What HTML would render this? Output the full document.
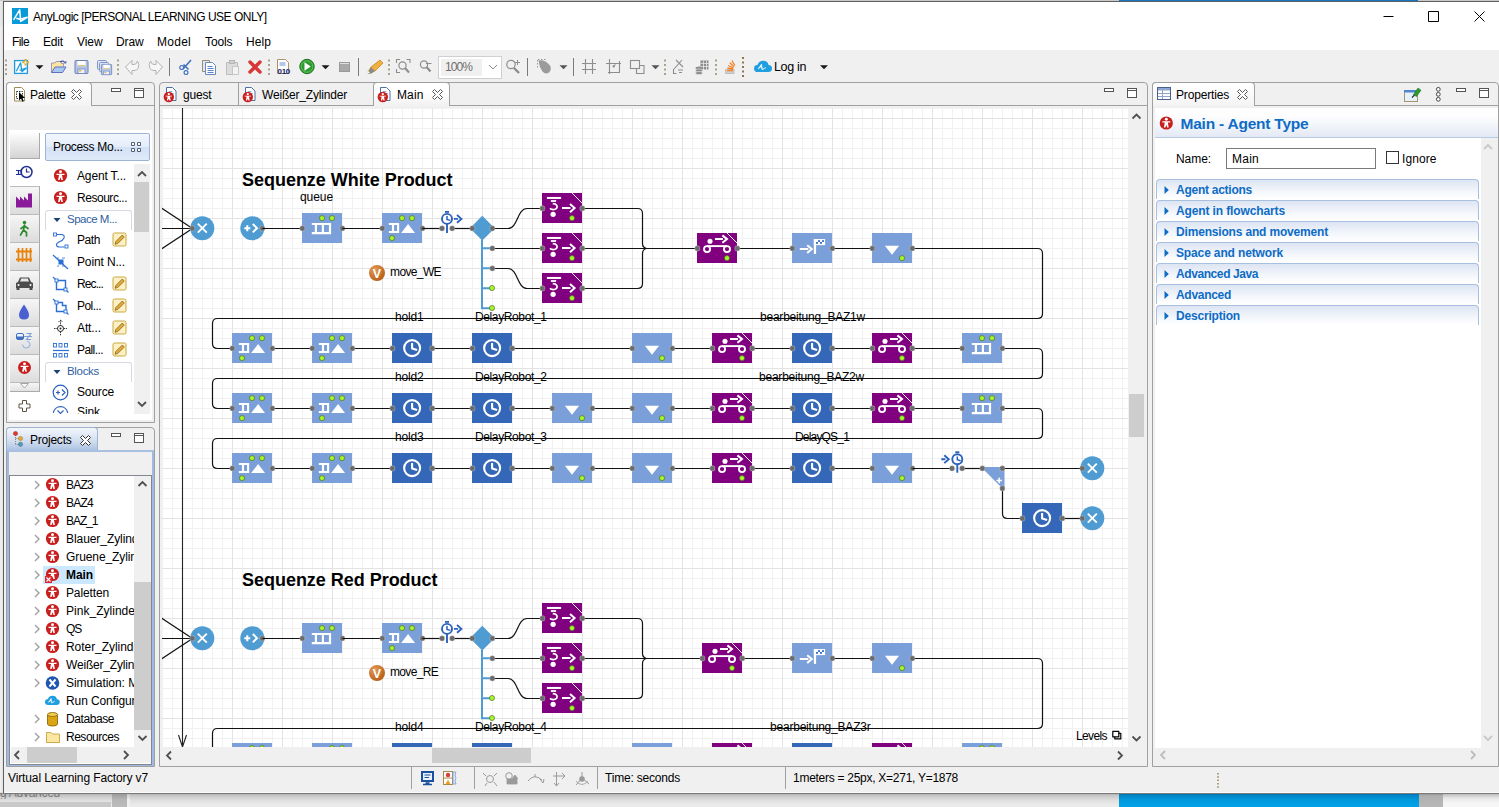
<!DOCTYPE html><html><head><meta charset="utf-8"><title>AnyLogic</title><style>
html,body{margin:0;padding:0}
body{width:1499px;height:807px;overflow:hidden;position:relative;background:#f4f4f4;font-family:"Liberation Sans",sans-serif;font-size:12px;color:#000}
.a{position:absolute;box-sizing:border-box}
.t{position:absolute;white-space:nowrap;font-family:"Liberation Sans",sans-serif}
svg{position:absolute;left:0;top:0;overflow:visible}
svg text{font-family:"Liberation Sans",sans-serif}
</style></head><body>
<div class="a" style="left:0px;top:0px;width:1499px;height:1px;background:#c9c9c9"></div>
<div class="a" style="left:1119px;top:0px;width:299px;height:1px;background:#1577c2"></div>
<div class="a" style="left:0px;top:1px;width:4px;height:793px;background:linear-gradient(90deg,#f2f2f2,#dcdcdc)"></div>
<div class="a" style="left:0px;top:1px;width:4px;height:25px;background:linear-gradient(90deg,#ebebeb,#d8d8d8)"></div>
<div class="a" style="left:0px;top:793px;width:1499px;height:14px;background:linear-gradient(#8a8a8a 0,#b4b4b4 1px,#c9c9c9 3px,#dedede 7px,#ebebeb 12px)"></div>
<div class="a" style="left:0px;top:802px;width:111px;height:5px;background:#c9c9c9"></div>
<div class="a" style="left:112px;top:794px;width:15px;height:13px;background:linear-gradient(#9a9a9a,#b4b4b4 5px,#bcbcbc)"></div>
<div class="a" style="left:127px;top:794px;width:3px;height:13px;background:linear-gradient(#c8c8c8,#f0f0f0 6px)"></div>
<div class="a" style="left:1119px;top:793px;width:300px;height:14px;background:linear-gradient(#045a8c,#0083c3 2px,#0095d8 6px,#00a0e6 11px)"></div>
<div class="a" style="left:1443px;top:794px;width:56px;height:13px;background:linear-gradient(#bdbdbd,#e6e6e6 4px,#f6f6f6 9px)"></div>
<div class="a" style="left:1419px;top:793px;width:24px;height:14px;background:linear-gradient(#8a8a8a,#b0b0b0 3px,#b8b8b8)"></div>
<span class="t" style="left:0.00px;top:786.84px;font-size:12px;line-height:12px;letter-spacing:-0.272px;color:#666;clip-path:inset(6px 0 0 0);opacity:0.8">g Advanced</span>
<div class="a" style="left:3px;top:1px;width:1496px;height:793px;background:#f0f0f0;border:1px solid #5f5f5f;border-bottom-color:#7a7a7a;border-right:none"></div>
<div class="a" style="left:4px;top:792px;width:1495px;height:1px;background:#fafafa"></div>
<div class="a" style="left:4px;top:2px;width:1495px;height:48px;background:#fff"></div>
<svg width="1499" height="807" ><rect x="12" y="8" width="16" height="16" fill="#0b9ad8"/><path d="M13.600,19.900L19.700,9.900L20.700,21.400L27.200,17.300L19.800,19.300L16.300,18.300" fill="none" stroke="#fff" stroke-width="1.500" stroke-linejoin="round"/></svg>
<span class="t" style="left:33.00px;top:10.84px;font-size:12px;line-height:12px;letter-spacing:-0.502px;color:#000;">AnyLogic [PERSONAL LEARNING USE ONLY]</span>
<svg width="1499" height="807"><path d="M1383.5,16.5h10M1428.5,11.5h10v10h-10zM1474.5,11.5l10,10m0,-10l-10,10" stroke="#000" stroke-width="1" fill="none"/></svg>
<span class="t" style="left:12.00px;top:35.84px;font-size:12px;line-height:12px;letter-spacing:-0.584px;color:#000;">File</span>
<span class="t" style="left:43.00px;top:35.84px;font-size:12px;line-height:12px;letter-spacing:-0.169px;color:#000;">Edit</span>
<span class="t" style="left:77.00px;top:35.84px;font-size:12px;line-height:12px;letter-spacing:-0.073px;color:#000;">View</span>
<span class="t" style="left:116.00px;top:35.84px;font-size:12px;line-height:12px;letter-spacing:-0.125px;color:#000;">Draw</span>
<span class="t" style="left:157.00px;top:35.84px;font-size:12px;line-height:12px;letter-spacing:0.264px;color:#000;">Model</span>
<span class="t" style="left:205.00px;top:35.84px;font-size:12px;line-height:12px;letter-spacing:-0.102px;color:#000;">Tools</span>
<span class="t" style="left:246.00px;top:35.84px;font-size:12px;line-height:12px;letter-spacing:0.080px;color:#000;">Help</span>
<svg width="1499" height="807" ><path d="M6,59.5V75.5" stroke="#a9a188" stroke-width="2" stroke-dasharray="2,2.5" fill="none"/><rect x="14.600" y="60.600" width="12.800" height="12.800" fill="#fff" stroke="#1d9bdc" stroke-width="1.300"/><path d="M16.300,71.200l4.300,-8.400l1.300,8.900l4.400,-3.700l-6.800,2.100" fill="none" stroke="#1d9bdc" stroke-width="1.300" stroke-linejoin="round"/><path d="M25.600,59v6.600M22.300,62.300h6.600" stroke="#d4a420" stroke-width="2"/><path d="M25.600,60.500v3.600M23.800,62.300h3.600" stroke="#fff7d0" stroke-width="0.800"/><path d="M35.5,65.2h8l-4,4z" fill="#1a1a1a"/><path d="M51.500,72.500v-9.500h3.500l1,-1.500h5.500v2h2v3" fill="#fbe5a0" stroke="#9a8fb4" stroke-width="0.900"/><path d="M51.500,72.500l3.500,-5.500h11l-3.500,5.500z" fill="#a9c7f0" stroke="#5f6fc0" stroke-width="1"/><path d="M60,62q2.500,-2 4.800,0.300" fill="none" stroke="#4a5a9a" stroke-width="1.200"/><path d="M63.600,63.200l2.600,0.300l0.200,-2.800z" fill="#4a5a9a"/><g transform="translate(74.5,60) scale(1)"><rect x="0.5" y="0.5" width="13" height="13" rx="1" fill="#b4c5e6" stroke="#6a7fb5"/><rect x="3" y="1" width="8" height="5" fill="#fff"/><rect x="3" y="5" width="8" height="1.2" fill="#e4c882"/><rect x="3.5" y="9" width="7" height="4.5" fill="#f4f4f8" stroke="#6d86c4" stroke-width="0.8"/><rect x="4.5" y="10" width="2.4" height="1.5" fill="#d9b45a"/></g><rect x="97.5" y="60.5" width="9" height="9" rx="1" fill="#dfe7f6" stroke="#7f95c8"/><rect x="99.500" y="62.5" width="9" height="9" rx="1" fill="#dfe7f6" stroke="#7f95c8"/><g transform="translate(101,64) scale(0.79)"><rect x="0.5" y="0.5" width="13" height="13" rx="1" fill="#b4c5e6" stroke="#6a7fb5"/><rect x="3" y="1" width="8" height="5" fill="#fff"/><rect x="3" y="5" width="8" height="1.2" fill="#e4c882"/><rect x="3.5" y="9" width="7" height="4.5" fill="#f4f4f8" stroke="#6d86c4" stroke-width="0.8"/><rect x="4.5" y="10" width="2.4" height="1.5" fill="#d9b45a"/></g><path d="M118,59.5V75.5" stroke="#a9a188" stroke-width="2" stroke-dasharray="2,2.5" fill="none"/><path d="M125.500,67l6.500,-6.500v4h2q2.500,0 3.500,-3.500q2.500,4 0.500,7.500q-1.500,2 -4,2h-2v4z" fill="#f6f6f6" stroke="#b3b3b3" stroke-width="1"/><path d="M162.500,67l-6.500,-6.500v4h-2q-2.500,0 -3.500,-3.500q-2.500,4 -0.500,7.500q1.500,2 4,2h2v4z" fill="#f6f6f6" stroke="#b3b3b3" stroke-width="1"/><path d="M169.5,58V76" stroke="#7a7a7a" stroke-width="1" fill="none"/><path d="M191,60l-8,9M183.500,64.500l5,5" stroke="#3f6fc0" stroke-width="1.600" fill="none"/><circle cx="181.700" cy="67.500" r="1.900" fill="#fff" stroke="#3f6fc0" stroke-width="1.2"/><circle cx="186" cy="72.500" r="1.900" fill="#fff" stroke="#3f6fc0" stroke-width="1.2"/><path d="M202.500,60.500h7v11h-7z" fill="#dfe9f8" stroke="#9a8f6a"/><path d="M205.500,62.500h7l3,3v9h-10z" fill="#fff" stroke="#6f86bd"/><path d="M207.500,66.500h5M207.500,68.500h6M207.500,70.500h6M207.500,72.500h6" stroke="#5b83cf" stroke-width="1"/><path d="M226.500,62.500h11v12h-11z" fill="#dcdcdc" stroke="#bdbdbd"/><rect x="229.500" y="60.500" width="5" height="3" fill="#cfcfcf" stroke="#b5b5b5"/><path d="M232.500,66.500h6v8h-6z" fill="#f3f3f3" stroke="#c5c5c5"/><path d="M250,62l10,10M260,62l-10,10" stroke="#d93636" stroke-width="3.400" stroke-linecap="round" fill="none"/><path d="M269,59.5V75.5" stroke="#a9a188" stroke-width="2" stroke-dasharray="2,2.5" fill="none"/><path d="M277.500,59.500h8l3,3v11h-11z" fill="#fff" stroke="#a9946a"/><path d="M279.500,63h6M279.500,65h6" stroke="#6a8fd0" stroke-width="1"/><text x="277.50" y="73.50" font-size="8" font-weight="bold" letter-spacing="-0.282" fill="#13205f" text-anchor="start" >010</text><circle cx="307" cy="66.500" r="7.200" fill="#2f9a2f" stroke="#1e6f1e" stroke-width="1"/><circle cx="307" cy="66.500" r="5.800" fill="none" stroke="#5cc25c" stroke-width="1"/><path d="M304.500,62.200l6.200,4.300l-6.200,4.300z" fill="#fff"/><path d="M321.5,65.2h8l-4,4z" fill="#1a1a1a"/><rect x="339.500" y="62.500" width="10" height="9" fill="#a9a9a9" stroke="#9a9a9a"/><path d="M340,63.500h9" stroke="#e0e0e0" stroke-width="1"/><path d="M358.5,58V76" stroke="#7a7a7a" stroke-width="1" fill="none"/><path d="M368,72l3,-5l9,-7l3,3l-8,8z" fill="#f0b03f" stroke="#c98a1e" stroke-width="0.800"/><path d="M371,67l4,4l-3.500,2.500l-4,0.500z" fill="#8a8a8a"/><path d="M367,73.500l3,-0.500l-1.500,-2z" fill="#fff6d0"/><path d="M389,59.5V75.5" stroke="#a9a188" stroke-width="2" stroke-dasharray="2,2.5" fill="none"/><path d="M396.500,63v-3.500h3.500M406.500,59.500h3.500v3.500M396.500,69v3.500h3.500" stroke="#8d8d8d" stroke-width="1.100" fill="none"/><circle cx="402.500" cy="65.500" r="3.600" fill="none" stroke="#8d8d8d" stroke-width="1.200"/><path d="M405,68l4,4.500" stroke="#8d8d8d" stroke-width="2"/><circle cx="424" cy="64.500" r="3.600" fill="none" stroke="#8d8d8d" stroke-width="1.200"/><path d="M426.500,67l4,4.500" stroke="#8d8d8d" stroke-width="2.200"/><path d="M426,63.500h5.500" stroke="#8d8d8d" stroke-width="1"/><rect x="438.500" y="56.500" width="63" height="22" fill="#fff" stroke="#d0d0d0"/><rect x="441" y="59" width="41" height="17" fill="#f0f0f0"/><text x="445.00" y="71.00" font-size="12" letter-spacing="-0.923" fill="#6d6d6d" text-anchor="start" >100%</text><path d="M489,65l4,4l4,-4" stroke="#8a8a8a" stroke-width="1" fill="none"/><circle cx="511" cy="64.500" r="4.200" fill="none" stroke="#8d8d8d" stroke-width="1.200"/><path d="M514,68l5,5" stroke="#8d8d8d" stroke-width="2.400"/><path d="M515,62.500h5M517.500,60v5" stroke="#8d8d8d" stroke-width="1"/><path d="M527.5,58V76" stroke="#7a7a7a" stroke-width="1" fill="none"/><path d="M538.500,60.500q6,-1.500 11.500,5q2,4 -1,7q-3.500,2.500 -6.500,-1q-3,-4 -4,-11z" fill="#9b9b9b"/><path d="M537.500,60v9M538,59.500h8" stroke="#9b9b9b" stroke-width="1" stroke-dasharray="1.500,1.500" fill="none"/><path d="M559.5,65.2h8l-4,4z" fill="#555"/><path d="M573.5,58V76" stroke="#7a7a7a" stroke-width="1" fill="none"/><path d="M585.500,59v15M592.500,59v15M582,63.500h14M582,69.500h14" stroke="#8d8d8d" stroke-width="1.100" fill="none"/><path d="M609.500,59v15M606,63.500h15M619.500,61v11.500h-11.500" stroke="#8d8d8d" stroke-width="1.100" fill="none"/><path d="M612,66l4,-2l-2,4z" fill="#8d8d8d"/><rect x="630.500" y="60.500" width="9" height="8" fill="none" stroke="#8d8d8d" stroke-width="1.100"/><path d="M636.500,69v4.500h7.500v-8h-4" fill="none" stroke="#8d8d8d" stroke-width="1.100"/><path d="M651.5,65.2h8l-4,4z" fill="#555"/><path d="M665,59.5V75.5" stroke="#a9a188" stroke-width="2" stroke-dasharray="2,2.5" fill="none"/><path d="M682,60l-8,9M673.500,69v4.500h3M678,70h5M679,72.500h3M676,60l7,7" stroke="#8d8d8d" stroke-width="1.100" fill="none"/><rect x="700.500" y="60.500" width="8" height="9" fill="#8d8d8d"/><path d="M701,63.500h8M701,66.500h8M703.500,61v9M706.500,61v9" stroke="#e8e8e8" stroke-width="0.800"/><ellipse cx="699" cy="68" rx="3.500" ry="1.600" fill="#8d8d8d"/><ellipse cx="699" cy="70.500" rx="3.500" ry="1.600" fill="#8d8d8d" stroke="#f0f0f0" stroke-width="0.500"/><ellipse cx="699" cy="73" rx="3.500" ry="1.600" fill="#8d8d8d" stroke="#f0f0f0" stroke-width="0.500"/><path d="M716,59.5V75.5" stroke="#a9a188" stroke-width="2" stroke-dasharray="2,2.5" fill="none"/><path d="M725.500,69v4.500h8.500v-4.500" fill="#cfcfcf" stroke="#bdbdbd" stroke-width="1"/><path d="M727,70.500h6M727.300,68l5.800,1M728.200,65.500l5.300,2.500M729.800,62.800l4.200,4M732,60.500l2.800,5" stroke="#f48024" stroke-width="1.300" fill="none"/><path d="M743,57V77.5" stroke="#8c7a4e" stroke-width="2" stroke-dasharray="2,2.5" fill="none"/><g transform="translate(754,60.5) scale(1)"><path d="M4,11.500q-4,0 -4,-3.600q0,-3.200 3.600,-3.600q1.400,-4 5.600,-4q4.400,0 5.400,4.200q3.400,0.300 3.400,3.500q0,3.500 -4,3.500z" fill="#1f9fe0"/><path d="M4,8.500l3.500,-5l1,5.500l3.500,-2l-4,2.200l-0.700,-3.200z" fill="#fff" stroke="#fff" stroke-width="0.500"/></g><text x="774.00" y="71.00" font-size="12.5" letter-spacing="-0.342" fill="#000" text-anchor="start" >Log in</text><path d="M820,65.2h8l-4,4z" fill="#1a1a1a"/></svg>
<div class="a" style="left:6px;top:82px;width:149px;height:341px;background:#f0f0f0;border:1px solid #a0a0a0;border-radius:4px 4px 0 0"></div><div class="a" style="left:7px;top:105px;width:147px;height:1px;background:#a0a0a0"></div><div class="a" style="left:6px;top:82px;width:86px;height:24px;background:linear-gradient(#fff,#f4f4f4);border:1px solid #a0a0a0;border-bottom:none;border-radius:4px 4px 0 0"></div><span class="t" style="left:30.00px;top:89.34px;font-size:12px;line-height:12px;letter-spacing:-0.265px;color:#000;">Palette</span><div class="a" style="left:9px;top:130px;width:143px;height:290px;background:#fff"></div><div class="a" style="left:10px;top:133px;width:30px;height:26px;background:linear-gradient(#fdfdfd,#d4d4d4);border-right:1px solid #aaa;border-bottom:1px solid #aaa"></div><div class="a" style="left:10px;top:186px;width:30px;height:28px;background:linear-gradient(#f6f6f6,#dcdcdc);border-right:1px solid #aaa;border-top:1px solid #bbb"></div><div class="a" style="left:10px;top:214px;width:30px;height:28px;background:linear-gradient(#f6f6f6,#dcdcdc);border-right:1px solid #aaa;border-top:1px solid #bbb"></div><div class="a" style="left:10px;top:242px;width:30px;height:28px;background:linear-gradient(#f6f6f6,#dcdcdc);border-right:1px solid #aaa;border-top:1px solid #bbb"></div><div class="a" style="left:10px;top:270px;width:30px;height:28px;background:linear-gradient(#f6f6f6,#dcdcdc);border-right:1px solid #aaa;border-top:1px solid #bbb"></div><div class="a" style="left:10px;top:298px;width:30px;height:28px;background:linear-gradient(#f6f6f6,#dcdcdc);border-right:1px solid #aaa;border-top:1px solid #bbb"></div><div class="a" style="left:10px;top:326px;width:30px;height:28px;background:linear-gradient(#f6f6f6,#dcdcdc);border-right:1px solid #aaa;border-top:1px solid #bbb"></div><div class="a" style="left:10px;top:354px;width:30px;height:28px;background:linear-gradient(#f6f6f6,#dcdcdc);border-right:1px solid #aaa;border-top:1px solid #bbb"></div><div class="a" style="left:10px;top:382px;width:30px;height:10px;background:linear-gradient(#f6f6f6,#e2e2e2);border-right:1px solid #aaa;border-top:1px solid #bbb;border-bottom:1px solid #aaa"></div><div class="a" style="left:45px;top:133px;width:105px;height:28px;background:linear-gradient(#f3f7fd,#e3ecfa 50%,#d3e1f6 51%,#dfe9f9);border:1px solid #9db3d4;border-radius:2px"></div><span class="t" style="left:53.00px;top:140.84px;font-size:12px;line-height:12px;letter-spacing:-0.296px;color:#000;">Process Mo...</span><span class="t" style="left:77.00px;top:170.34px;font-size:12px;line-height:12px;letter-spacing:-0.148px;color:#000;">Agent T...</span><span class="t" style="left:77.00px;top:192.34px;font-size:12px;line-height:12px;letter-spacing:-0.468px;color:#000;">Resourc...</span><div class="a" style="left:45px;top:210px;width:87px;height:20px;background:#fff;border:1px solid #d4d9e2;border-bottom:none;border-radius:3px 3px 0 0"></div><span class="t" style="left:67.00px;top:213.77px;font-size:11.5px;line-height:11.5px;letter-spacing:-0.496px;color:#2f5e9e;">Space M...</span><span class="t" style="left:77.00px;top:234.34px;font-size:12px;line-height:12px;letter-spacing:-0.421px;color:#000;">Path</span><span class="t" style="left:77.00px;top:256.34px;font-size:12px;line-height:12px;letter-spacing:-0.135px;color:#000;">Point N...</span><span class="t" style="left:77.00px;top:278.34px;font-size:12px;line-height:12px;letter-spacing:-0.890px;color:#000;">Rec...</span><span class="t" style="left:77.00px;top:300.34px;font-size:12px;line-height:12px;letter-spacing:-0.557px;color:#000;">Pol...</span><span class="t" style="left:77.00px;top:322.34px;font-size:12px;line-height:12px;letter-spacing:-0.112px;color:#000;">Att...</span><span class="t" style="left:77.00px;top:344.34px;font-size:12px;line-height:12px;letter-spacing:-0.573px;color:#000;">Pall...</span><div class="a" style="left:45px;top:362px;width:87px;height:20px;background:#fff;border:1px solid #d4d9e2;border-bottom:none;border-radius:3px 3px 0 0"></div><span class="t" style="left:67.00px;top:365.77px;font-size:11.5px;line-height:11.5px;letter-spacing:-0.312px;color:#2f5e9e;">Blocks</span><span class="t" style="left:77.00px;top:386.34px;font-size:12px;line-height:12px;letter-spacing:-0.170px;color:#000;">Source</span><div class="a" style="left:77px;top:405px;width:50px;height:9px;overflow:hidden"><span class="t" style="left:0.00px;top:1.34px;font-size:12px;line-height:12px;letter-spacing:-0.086px;color:#000;">Sink</span></div><div class="a" style="left:134px;top:164px;width:16px;height:250px;background:#f0f0f0"></div><div class="a" style="left:134px;top:182px;width:15px;height:50px;background:#cdcdcd"></div><svg width="1499" height="807" ><circle cx="26.500" cy="172" r="5.500" fill="none" stroke="#1f2f94" stroke-width="1.500"/><path d="M26.500,168.500v3.500h3" stroke="#1f2f94" stroke-width="1.200" fill="none"/><path d="M16,170.500h6M16,174.500h6M18.500,170.500v4M21.500,170.500v4" stroke="#1f2f94" stroke-width="1.200" fill="none"/><path d="M16,207.500v-11l4,4v-4l4,4v-4l4,4v-7h4v14z" fill="#8a1a9a"/><circle cx="24.500" cy="222.500" r="1.800" fill="#2d8a2d"/><path d="M24.500,225l-1,5l-3,5M23.500,230l3,2.500v3.500M24.500,226l-3.500,2.500M24.500,226l3.500,2.500" stroke="#2d8a2d" stroke-width="1.700" fill="none" stroke-linecap="round"/><path d="M16,251.500h16M16,259.500h16" stroke="#e8820c" stroke-width="1.800"/><path d="M18.500,248v14M22.500,248v14M26.500,248v14M30.500,248v14" stroke="#e8820c" stroke-width="1.700"/><path d="M16,288v-5l2,-1l2,-4.500h9l2,4.500l2,1v5z" fill="#4d4d4d"/><path d="M20,281.500l1.200,-3h6.600l1.200,3z" fill="#e8e8e8"/><rect x="16.500" y="287" width="3" height="3" fill="#4d4d4d"/><rect x="29.500" y="287" width="3" height="3" fill="#4d4d4d"/><circle cx="18.500" cy="285" r="1" fill="#fff"/><circle cx="30.500" cy="285" r="1" fill="#fff"/><path d="M24,304.500q-5,7 -5,10.500q0,4.500 5,4.500q5,0 5,-4.500q0,-3.500 -5,-10.500z" fill="#4a5fd0"/><rect x="16.500" y="333.500" width="7" height="6" rx="1.500" fill="#eef4fc" stroke="#3f6fc0"/><rect x="17" y="336.500" width="6" height="3" fill="#3f6fc0"/><path d="M24,336.500h8M26.500,333.500h4.500l-4.500,6h4.500" stroke="#7f9fd6" stroke-width="1.100" fill="none"/><path d="M22.500,344.500q0.500,3.500 4,3.500q3.500,-0.500 3.500,-4q-0.500,-2.500 -3,-3" stroke="#9ab4dc" stroke-width="1.100" fill="none"/><circle cx="24.5" cy="367.5" r="6.5" fill="#c81e1e"/><circle cx="24.5" cy="363.856" r="1.43" fill="#fff"/><path d="M20.56,365.83L28.44,365.83L28.44,367.01L25.98,367.01L26.86,371.83L25.39,371.83L24.50,369.27L23.61,371.83L22.14,371.83L23.02,367.01L20.56,367.01Z" fill="#fff"/><path d="M20.500,383.500h8l-4,4.500z" fill="#fff" stroke="#9a9a9a" stroke-width="0.900"/><path d="M22.500,400.500h4v3.500h3.500v4h-3.500v3.500h-4v-3.500h-3.500v-4h3.500z" fill="#fff" stroke="#5c5540" stroke-width="1"/><path d="M131.500,142.500h3v3h-3zM137.500,142.500h3v3h-3zM131.500,148.500h3v3h-3zM137.500,148.500h3v3h-3z" fill="#fff" stroke="#55617a" stroke-width="1"/><circle cx="60.5" cy="175.5" r="6.6" fill="#c81e1e"/><circle cx="60.5" cy="171.8" r="1.45" fill="#fff"/><path d="M56.50,173.80L64.50,173.80L64.50,175.00L62.00,175.00L62.90,179.90L61.40,179.90L60.50,177.30L59.60,179.90L58.10,179.90L59.00,175.00L56.50,175.00Z" fill="#fff"/><circle cx="60.5" cy="197.5" r="6.6" fill="#c81e1e"/><circle cx="60.5" cy="193.8" r="1.45" fill="#fff"/><path d="M56.50,195.80L64.50,195.80L64.50,197.00L62.00,197.00L62.90,201.90L61.40,201.90L60.50,199.30L59.60,201.90L58.10,201.90L59.00,197.00L56.50,197.00Z" fill="#fff"/><path d="M53.5,218h7l-3.500,4z" fill="#1d3f7a"/><rect x="113" y="233" width="13" height="13" rx="1.500" fill="#fdf0c4" stroke="#c9a93f" stroke-width="1"/><path d="M115.8,241.5l6.500,-6.500l2,2l-6.500,6.500l-2.800,0.800z" fill="#e2a93a" stroke="#7a5a12" stroke-width="0.700"/><rect x="113" y="277" width="13" height="13" rx="1.500" fill="#fdf0c4" stroke="#c9a93f" stroke-width="1"/><path d="M115.8,285.5l6.500,-6.500l2,2l-6.500,6.500l-2.800,0.800z" fill="#e2a93a" stroke="#7a5a12" stroke-width="0.700"/><rect x="113" y="299" width="13" height="13" rx="1.500" fill="#fdf0c4" stroke="#c9a93f" stroke-width="1"/><path d="M115.8,307.5l6.500,-6.500l2,2l-6.500,6.500l-2.800,0.800z" fill="#e2a93a" stroke="#7a5a12" stroke-width="0.700"/><rect x="113" y="321" width="13" height="13" rx="1.500" fill="#fdf0c4" stroke="#c9a93f" stroke-width="1"/><path d="M115.8,329.5l6.500,-6.500l2,2l-6.500,6.500l-2.800,0.800z" fill="#e2a93a" stroke="#7a5a12" stroke-width="0.700"/><rect x="113" y="343" width="13" height="13" rx="1.500" fill="#fdf0c4" stroke="#c9a93f" stroke-width="1"/><path d="M115.8,351.5l6.500,-6.500l2,2l-6.500,6.500l-2.800,0.800z" fill="#e2a93a" stroke="#7a5a12" stroke-width="0.700"/><path d="M56,234.500h5q4,0 3,3.500q-1,2.500 -5,4q-3,1.500 -2.500,3.500q0.500,1.500 3,1.500h5" fill="none" stroke="#2a6fd6" stroke-width="1.150"/><rect x="53.500" y="233" width="3" height="3" fill="#fff" stroke="#2a6fd6" stroke-width="0.900"/><rect x="65" y="245" width="3" height="3" fill="#fff" stroke="#2a6fd6" stroke-width="0.900"/><path d="M53,255l15,14" stroke="#2a6fd6" stroke-width="1.200"/><rect x="58.500" y="259.500" width="5" height="5" fill="#2a6fd6"/><path d="M57,258h2M62,258h3M57,266h2M62,266h3" stroke="#2a6fd6" stroke-width="0.800" fill="none"/><path d="M53,277l3,3M65.500,289.500l3,3" stroke="#2a6fd6" stroke-width="1.100"/><path d="M56.500,280.500h9v9h-9z" fill="none" stroke="#2a6fd6" stroke-width="1.400"/><rect x="55" y="279" width="3" height="3" fill="#fff" stroke="#2a6fd6" stroke-width="0.900"/><rect x="64" y="288" width="3" height="3" fill="#fff" stroke="#2a6fd6" stroke-width="0.900"/><path d="M53,299l3,3M65.500,311.500l3,3" stroke="#2a6fd6" stroke-width="1.100"/><path d="M56.500,302.500h6v3h3.500v6h-9.500z" fill="none" stroke="#2a6fd6" stroke-width="1.400"/><rect x="55" y="301" width="3" height="3" fill="#fff" stroke="#2a6fd6" stroke-width="0.900"/><rect x="64" y="310" width="3" height="3" fill="#fff" stroke="#2a6fd6" stroke-width="0.900"/><circle cx="60.500" cy="328.500" r="3" fill="none" stroke="#222" stroke-width="1"/><circle cx="60.500" cy="328.500" r="1" fill="#222"/><path d="M60.500,320v5.500M60.500,331.500v4M54,328.500h3.500M63.500,328.500h3.500M58.500,322l2,-2l2,2" stroke="#222" stroke-width="0.900" fill="none" stroke-dasharray="1.500,0.800"/><path d="M53,350.500h16" stroke="#2a6fd6" stroke-width="1.200"/><rect x="53.5" y="343.5" width="3" height="3.500" fill="none" stroke="#2a6fd6" stroke-width="0.900"/><rect x="53.5" y="353.5" width="3" height="3.500" fill="none" stroke="#2a6fd6" stroke-width="0.900"/><rect x="59" y="343.5" width="3" height="3.500" fill="none" stroke="#2a6fd6" stroke-width="0.900"/><rect x="59" y="353.5" width="3" height="3.500" fill="none" stroke="#2a6fd6" stroke-width="0.900"/><rect x="64.5" y="343.5" width="3" height="3.500" fill="none" stroke="#2a6fd6" stroke-width="0.900"/><rect x="64.5" y="353.5" width="3" height="3.500" fill="none" stroke="#2a6fd6" stroke-width="0.900"/><path d="M53.5,370h7l-3.500,4z" fill="#1d3f7a"/><circle cx="60.500" cy="392.500" r="7.300" fill="#fff" stroke="#2a5fc0" stroke-width="1.200"/><path d="M56,392.500h4M58,390.500v4M62,389.500l3,3l-3,3" stroke="#2a5fc0" stroke-width="1.200" fill="none"/><path d="M53.300,412.800a7.300,7.300 0 0 1 14.400,0" fill="#fff" stroke="#2a5fc0" stroke-width="1.200"/><path d="M57.500,410.500l3,3l3,-3" stroke="#2a5fc0" stroke-width="1.100" fill="none"/><path d="M138,176l4,-4l4,4" stroke="#505050" stroke-width="1.8" fill="none"/><path d="M138,402l4,4l4,-4" stroke="#505050" stroke-width="1.8" fill="none"/><rect x="111.5" y="88.5" width="9" height="3" fill="#fff" stroke="#555" stroke-width="1"/><rect x="134.5" y="88.5" width="9" height="9" fill="#fff" stroke="#555" stroke-width="1"/><path d="M134.5,90.5h9" stroke="#555" stroke-width="1"/><path d="M14.500,87.500h7l3,3v10.500h-10z" fill="#fff" stroke="#a08c5a" stroke-width="1"/><path d="M16.500,91.500h6v7h-6z" fill="none" stroke="#333" stroke-width="1" stroke-dasharray="1.500,1"/><path d="M19,92v8.500l2,-2l1.500,3.200l1.300,-0.600l-1.500,-3.100h2.700z" fill="#000"/><path d="M71.5,91.5l2,-2l3,3l3,-3l2,2l-3,3l3,3l-2,2l-3,-3l-3,3l-2,-2l3,-3z" fill="#fff" stroke="#555" stroke-width="1" stroke-linejoin="miter"/></svg>
<div class="a" style="left:6px;top:427px;width:149px;height:340px;background:#f0f0f0;border:1px solid #a0a0a0;border-radius:4px 4px 0 0"></div><div class="a" style="left:6px;top:427px;width:92px;height:24px;background:linear-gradient(#f3f7fc,#cfdcee 60%,#a9c0e2);border:1px solid #9fb2d0;border-bottom:none;border-radius:4px 4px 0 0"></div><div class="a" style="left:7px;top:450px;width:147px;height:316px;border:2px solid #9fbbe3;border-top:2px solid #a9c0e2;background:#f0f0f0"></div><span class="t" style="left:30.00px;top:434.34px;font-size:12px;line-height:12px;letter-spacing:-0.231px;color:#000;">Projects</span><div class="a" style="left:9px;top:475px;width:143px;height:290px;background:#fff;border:1px solid #828790"></div><div class="a" style="left:11px;top:475px;width:123px;height:272px;overflow:hidden"><span class="t" style="left:55.00px;top:4.34px;font-size:12px;line-height:12px;letter-spacing:-0.753px;color:#000;">BAZ3</span><span class="t" style="left:55.00px;top:22.34px;font-size:12px;line-height:12px;letter-spacing:-0.753px;color:#000;">BAZ4</span><span class="t" style="left:55.00px;top:40.34px;font-size:12px;line-height:12px;letter-spacing:-1.037px;color:#000;">BAZ_1</span><span class="t" style="left:55.00px;top:58.34px;font-size:12px;line-height:12px;letter-spacing:-0.069px;color:#000;">Blauer_Zylinder</span><span class="t" style="left:55.00px;top:76.34px;font-size:12px;line-height:12px;letter-spacing:-0.091px;color:#000;">Gruene_Zylinder</span><div class="a" style="left:32px;top:91px;width:52px;height:18px;background:#cce8ff"></div><span class="t" style="left:55.00px;top:94.34px;font-size:12px;line-height:12px;font-weight:bold;letter-spacing:-0.083px;color:#000;">Main</span><span class="t" style="left:55.00px;top:112.34px;font-size:12px;line-height:12px;letter-spacing:-0.129px;color:#000;">Paletten</span><span class="t" style="left:55.00px;top:130.34px;font-size:12px;line-height:12px;letter-spacing:0.024px;color:#000;">Pink_Zylinder</span><span class="t" style="left:55.00px;top:148.34px;font-size:12px;line-height:12px;letter-spacing:-1.169px;color:#000;">QS</span><span class="t" style="left:55.00px;top:166.34px;font-size:12px;line-height:12px;letter-spacing:-0.049px;color:#000;">Roter_Zylinder</span><span class="t" style="left:55.00px;top:184.34px;font-size:12px;line-height:12px;letter-spacing:-0.186px;color:#000;">Weißer_Zylinder</span><span class="t" style="left:55.00px;top:202.34px;font-size:12px;line-height:12px;letter-spacing:-0.044px;color:#000;">Simulation: Main</span><span class="t" style="left:55.00px;top:220.34px;font-size:12px;line-height:12px;letter-spacing:-0.101px;color:#000;">Run Configuration</span><span class="t" style="left:55.00px;top:238.34px;font-size:12px;line-height:12px;letter-spacing:-0.421px;color:#000;">Database</span><span class="t" style="left:55.00px;top:256.34px;font-size:12px;line-height:12px;letter-spacing:-0.484px;color:#000;">Resources</span></div><div class="a" style="left:134px;top:476px;width:17px;height:271px;background:#f0f0f0"></div><div class="a" style="left:134px;top:582px;width:17px;height:148px;background:#cdcdcd"></div><div class="a" style="left:11px;top:747px;width:140px;height:16px;background:#f0f0f0"></div><div class="a" style="left:27px;top:747px;width:50px;height:16px;background:#cdcdcd"></div><svg width="1499" height="807" ><path d="M35,481l4,4l-4,4" stroke="#a0a0a0" stroke-width="1.400" fill="none"/><circle cx="52.5" cy="484.5" r="6.6" fill="#c81e1e"/><circle cx="52.5" cy="480.8" r="1.45" fill="#fff"/><path d="M48.50,482.80L56.50,482.80L56.50,484.00L54.00,484.00L54.90,488.90L53.40,488.90L52.50,486.30L51.60,488.90L50.10,488.90L51.00,484.00L48.50,484.00Z" fill="#fff"/><path d="M35,499l4,4l-4,4" stroke="#a0a0a0" stroke-width="1.400" fill="none"/><circle cx="52.5" cy="502.5" r="6.6" fill="#c81e1e"/><circle cx="52.5" cy="498.8" r="1.45" fill="#fff"/><path d="M48.50,500.80L56.50,500.80L56.50,502.00L54.00,502.00L54.90,506.90L53.40,506.90L52.50,504.30L51.60,506.90L50.10,506.90L51.00,502.00L48.50,502.00Z" fill="#fff"/><path d="M35,517l4,4l-4,4" stroke="#a0a0a0" stroke-width="1.400" fill="none"/><circle cx="52.5" cy="520.5" r="6.6" fill="#c81e1e"/><circle cx="52.5" cy="516.8" r="1.45" fill="#fff"/><path d="M48.50,518.80L56.50,518.80L56.50,520.00L54.00,520.00L54.90,524.90L53.40,524.90L52.50,522.30L51.60,524.90L50.10,524.90L51.00,520.00L48.50,520.00Z" fill="#fff"/><path d="M35,535l4,4l-4,4" stroke="#a0a0a0" stroke-width="1.400" fill="none"/><circle cx="52.5" cy="538.5" r="6.6" fill="#c81e1e"/><circle cx="52.5" cy="534.8" r="1.45" fill="#fff"/><path d="M48.50,536.80L56.50,536.80L56.50,538.00L54.00,538.00L54.90,542.90L53.40,542.90L52.50,540.30L51.60,542.90L50.10,542.90L51.00,538.00L48.50,538.00Z" fill="#fff"/><path d="M35,553l4,4l-4,4" stroke="#a0a0a0" stroke-width="1.400" fill="none"/><circle cx="52.5" cy="556.5" r="6.6" fill="#c81e1e"/><circle cx="52.5" cy="552.8" r="1.45" fill="#fff"/><path d="M48.50,554.80L56.50,554.80L56.50,556.00L54.00,556.00L54.90,560.90L53.40,560.90L52.50,558.30L51.60,560.90L50.10,560.90L51.00,556.00L48.50,556.00Z" fill="#fff"/><path d="M35,571l4,4l-4,4" stroke="#a0a0a0" stroke-width="1.400" fill="none"/><circle cx="52.5" cy="574.5" r="6.6" fill="#c81e1e"/><circle cx="52.5" cy="570.8" r="1.45" fill="#fff"/><path d="M48.50,572.80L56.50,572.80L56.50,574.00L54.00,574.00L54.90,578.90L53.40,578.90L52.50,576.30L51.60,578.90L50.10,578.90L51.00,574.00L48.50,574.00Z" fill="#fff"/><rect x="45" y="576" width="7" height="7" fill="#e0252c"/><path d="M46.500,577.500l4,4m0,-4l-4,4" stroke="#fff" stroke-width="1.100"/><path d="M35,589l4,4l-4,4" stroke="#a0a0a0" stroke-width="1.400" fill="none"/><circle cx="52.5" cy="592.5" r="6.6" fill="#c81e1e"/><circle cx="52.5" cy="588.8" r="1.45" fill="#fff"/><path d="M48.50,590.80L56.50,590.80L56.50,592.00L54.00,592.00L54.90,596.90L53.40,596.90L52.50,594.30L51.60,596.90L50.10,596.90L51.00,592.00L48.50,592.00Z" fill="#fff"/><path d="M35,607l4,4l-4,4" stroke="#a0a0a0" stroke-width="1.400" fill="none"/><circle cx="52.5" cy="610.5" r="6.6" fill="#c81e1e"/><circle cx="52.5" cy="606.8" r="1.45" fill="#fff"/><path d="M48.50,608.80L56.50,608.80L56.50,610.00L54.00,610.00L54.90,614.90L53.40,614.90L52.50,612.30L51.60,614.90L50.10,614.90L51.00,610.00L48.50,610.00Z" fill="#fff"/><path d="M35,625l4,4l-4,4" stroke="#a0a0a0" stroke-width="1.400" fill="none"/><circle cx="52.5" cy="628.5" r="6.6" fill="#c81e1e"/><circle cx="52.5" cy="624.8" r="1.45" fill="#fff"/><path d="M48.50,626.80L56.50,626.80L56.50,628.00L54.00,628.00L54.90,632.90L53.40,632.90L52.50,630.30L51.60,632.90L50.10,632.90L51.00,628.00L48.50,628.00Z" fill="#fff"/><path d="M35,643l4,4l-4,4" stroke="#a0a0a0" stroke-width="1.400" fill="none"/><circle cx="52.5" cy="646.5" r="6.6" fill="#c81e1e"/><circle cx="52.5" cy="642.8" r="1.45" fill="#fff"/><path d="M48.50,644.80L56.50,644.80L56.50,646.00L54.00,646.00L54.90,650.90L53.40,650.90L52.50,648.30L51.60,650.90L50.10,650.90L51.00,646.00L48.50,646.00Z" fill="#fff"/><path d="M35,661l4,4l-4,4" stroke="#a0a0a0" stroke-width="1.400" fill="none"/><circle cx="52.5" cy="664.5" r="6.6" fill="#c81e1e"/><circle cx="52.5" cy="660.8" r="1.45" fill="#fff"/><path d="M48.50,662.80L56.50,662.80L56.50,664.00L54.00,664.00L54.90,668.90L53.40,668.90L52.50,666.30L51.60,668.90L50.10,668.90L51.00,664.00L48.50,664.00Z" fill="#fff"/><path d="M35,679l4,4l-4,4" stroke="#a0a0a0" stroke-width="1.400" fill="none"/><circle cx="52.500" cy="683" r="6.800" fill="#1f56b0"/><path d="M49.500,679.5l6,7m0,-7l-6,7" stroke="#fff" stroke-width="2"/><g transform="translate(45,695.5) scale(0.82)"><path d="M4,11.500q-4,0 -4,-3.600q0,-3.200 3.600,-3.600q1.400,-4 5.600,-4q4.400,0 5.400,4.200q3.400,0.300 3.400,3.500q0,3.500 -4,3.500z" fill="#1f9fe0"/><path d="M4,8.500l3.500,-5l1,5.500l3.500,-2l-4,2.200l-0.700,-3.200z" fill="#fff" stroke="#fff" stroke-width="0.500"/></g><path d="M35,715l4,4l-4,4" stroke="#a0a0a0" stroke-width="1.400" fill="none"/><path d="M47.500,714.5v9.500a5,2 0 0 0 10,0v-9.500" fill="#d9a514" stroke="#8c6a0a" stroke-width="0.900"/><ellipse cx="52.500" cy="714.5" rx="5" ry="2" fill="#f3cf55" stroke="#8c6a0a" stroke-width="0.900"/><path d="M35,733l4,4l-4,4" stroke="#a0a0a0" stroke-width="1.400" fill="none"/><path d="M46.500,742.5v-10h4.500l1.500,1.500h7v8.500z" fill="#fbe6a2" stroke="#c9a13c" stroke-width="0.900"/><path d="M138.5,486l4,-4l4,4" stroke="#505050" stroke-width="1.8" fill="none"/><path d="M138.5,736l4,4l4,-4" stroke="#505050" stroke-width="1.8" fill="none"/><path d="M19,751l-4,4l4,4" stroke="#505050" stroke-width="1.8" fill="none"/><path d="M124,751l4,4l-4,4" stroke="#505050" stroke-width="1.8" fill="none"/><rect x="111.5" y="433.5" width="9" height="3" fill="#fff" stroke="#555" stroke-width="1"/><rect x="134.5" y="433.5" width="9" height="9" fill="#fff" stroke="#555" stroke-width="1"/><path d="M134.5,435.5h9" stroke="#555" stroke-width="1"/><path d="M80.5,437.5l2,-2l3,3l3,-3l2,2l-3,3l3,3l-2,2l-3,-3l-3,3l-2,-2l3,-3z" fill="#fff" stroke="#333" stroke-width="1" stroke-linejoin="miter"/><path d="M15.500,435v10M15.500,438.500h3M15.500,444.500h3" stroke="#888" stroke-width="1" fill="none" stroke-dasharray="1,1"/><circle cx="15.500" cy="433.500" r="2.100" fill="#e0392e" stroke="#a02a1f" stroke-width="0.500"/><circle cx="20.500" cy="438.500" r="2.100" fill="#e2a83a" stroke="#a67c12" stroke-width="0.500"/><circle cx="20.500" cy="444.300" r="2.100" fill="#5a9bb0" stroke="#2f6a8a" stroke-width="0.500"/></svg>
<div class="a" style="left:159px;top:82px;width:989px;height:685px;background:#f0f0f0;border:1px solid #a0a0a0;border-radius:4px 4px 0 0"></div><div class="a" style="left:160px;top:105px;width:987px;height:1px;background:#a0a0a0"></div><div class="a" style="left:238px;top:83px;width:1px;height:22px;background:#a0a0a0"></div><div class="a" style="left:373px;top:82px;width:77px;height:24px;background:linear-gradient(#fff,#fff 40%,#f1f1f1);border:1px solid #a0a0a0;border-bottom:none;border-radius:4px 4px 0 0"></div><span class="t" style="left:183.00px;top:89.34px;font-size:12px;line-height:12px;letter-spacing:-0.171px;color:#000;">guest</span><span class="t" style="left:262.00px;top:89.34px;font-size:12px;line-height:12px;letter-spacing:-0.186px;color:#000;">Weißer_Zylinder</span><span class="t" style="left:397.00px;top:89.34px;font-size:12px;line-height:12px;letter-spacing:0.123px;color:#000;">Main</span><svg width="1499" height="807" ><path d="M166.5,87.500h6l3.500,3.500v9.500h-9.500z" fill="#fff" stroke="#4f6f9f" stroke-width="1"/><path d="M169,91.500h3.500M171.5,93.500h2.500" stroke="#8fb0e0" stroke-width="1"/><circle cx="168.8" cy="97" r="5.2" fill="#c81e1e"/><circle cx="168.8" cy="94.0848" r="1.14" fill="#fff"/><path d="M165.65,95.66L171.95,95.66L171.95,96.61L169.98,96.61L170.69,100.47L169.51,100.47L168.80,98.42L168.09,100.47L166.91,100.47L167.62,96.61L165.65,96.61Z" fill="#fff"/><path d="M245.5,87.500h6l3.500,3.500v9.500h-9.500z" fill="#fff" stroke="#4f6f9f" stroke-width="1"/><path d="M248,91.500h3.500M250.5,93.500h2.500" stroke="#8fb0e0" stroke-width="1"/><circle cx="247.8" cy="97" r="5.2" fill="#c81e1e"/><circle cx="247.8" cy="94.0848" r="1.14" fill="#fff"/><path d="M244.65,95.66L250.95,95.66L250.95,96.61L248.98,96.61L249.69,100.47L248.51,100.47L247.80,98.42L247.09,100.47L245.91,100.47L246.62,96.61L244.65,96.61Z" fill="#fff"/><path d="M380.5,87.500h6l3.500,3.500v9.500h-9.500z" fill="#fff" stroke="#4f6f9f" stroke-width="1"/><path d="M383,91.500h3.500M385.5,93.500h2.500" stroke="#8fb0e0" stroke-width="1"/><circle cx="382.8" cy="97" r="5.2" fill="#c81e1e"/><circle cx="382.8" cy="94.0848" r="1.14" fill="#fff"/><path d="M379.65,95.66L385.95,95.66L385.95,96.61L383.98,96.61L384.69,100.47L383.51,100.47L382.80,98.42L382.09,100.47L380.91,100.47L381.62,96.61L379.65,96.61Z" fill="#fff"/><path d="M432.5,91.5l2,-2l3,3l3,-3l2,2l-3,3l3,3l-2,2l-3,-3l-3,3l-2,-2l3,-3z" fill="#fff" stroke="#555" stroke-width="1" stroke-linejoin="miter"/><rect x="1104.5" y="88.5" width="9" height="3" fill="#fff" stroke="#555" stroke-width="1"/><rect x="1127.5" y="88.5" width="9" height="9" fill="#fff" stroke="#555" stroke-width="1"/><path d="M1127.5,90.5h9" stroke="#555" stroke-width="1"/></svg>
<svg width="1499" height="807" style="clip-path:inset(106px 371px 60px 161px)"><defs><radialGradient id="vg" cx="0.35" cy="0.3" r="0.8"><stop offset="0" stop-color="#e39a55"/><stop offset="1" stop-color="#b4590f"/></radialGradient>
<pattern id="g10" x="162" y="108" width="10" height="10" patternUnits="userSpaceOnUse"><path d="M0.5,0V10M0,0.5H10" stroke="#f1f1f1" stroke-width="1" fill="none"/></pattern>
<pattern id="g50" x="182" y="118" width="50" height="50" patternUnits="userSpaceOnUse"><path d="M0.5,0V50M0,0.5H50" stroke="#e3e3e3" stroke-width="1" fill="none"/></pattern></defs>
<rect x="160" y="106" width="970" height="642" fill="#fff"/>
<rect x="160" y="106" width="970" height="642" fill="url(#g10)"/>
<rect x="160" y="106" width="970" height="642" fill="url(#g50)"/>
<path d="M182.5,106V747M178.5,735l4,12l4,-12" stroke="#222" stroke-width="1.1" fill="none"/>
<text x="242.00" y="186.00" font-size="18" font-weight="bold" letter-spacing="-0.023" fill="#000" text-anchor="start" >Sequenze White Product</text>
<text x="242.00" y="586.00" font-size="18" font-weight="bold" letter-spacing="-0.026" fill="#000" text-anchor="start" >Sequenze Red Product</text>
<text x="300.00" y="201.00" font-size="12" letter-spacing="-0.073" fill="#000" text-anchor="start" >queue</text>
<path d="M160,207L192.5,228.5M160,228.5H192.5M160,250L192.5,228.5" fill="none" stroke="#111" stroke-width="1.2"/>
<circle cx="202.3" cy="228.2" r="12" fill="#4f9cd3"/>
<path d="M197.8,223.7l9,9m0,-9l-9,9" stroke="#fff" stroke-width="1.9" fill="none"/>
<rect x="189.90" y="225.85" width="4.9" height="5.1" rx="1.700" fill="#6b6b6b" stroke="#d8d8d8" stroke-opacity="0.5" stroke-width="0.8"/>
<circle cx="252.3" cy="228.2" r="12" fill="#4f9cd3"/>
<path d="M244.3,228.2h6m-3,-3v6" stroke="#fff" stroke-width="2" fill="none"/>
<path d="M252.8,224l4.200,4.200l-4.200,4.200" stroke="#fff" stroke-width="2" fill="none"/>
<rect x="259.90" y="225.85" width="4.9" height="5.1" rx="1.700" fill="#6b6b6b" stroke="#d8d8d8" stroke-opacity="0.5" stroke-width="0.8"/>
<path d="M262.5,228.5H302.5" fill="none" stroke="#111" stroke-width="1.2"/>
<rect x="302" y="213" width="40" height="30" fill="#7b9fd8"/>
<path d="M311.8,224h19.3M311.8,233.05h19.3M315.9,224v9M322.9,224v9M330,224v9" stroke="#fff" stroke-width="2.2" fill="none"/>
<circle cx="322.0" cy="218.1" r="2.55" fill="#a7f52d" stroke="#3f6212" stroke-width="0.6"/>
<circle cx="332.0" cy="218.1" r="2.55" fill="#a7f52d" stroke="#3f6212" stroke-width="0.6"/>
<rect x="299.90" y="225.85" width="4.9" height="5.1" rx="1.700" fill="#6b6b6b" stroke="#d8d8d8" stroke-opacity="0.5" stroke-width="0.8"/>
<rect x="339.90" y="225.85" width="4.9" height="5.1" rx="1.700" fill="#6b6b6b" stroke="#d8d8d8" stroke-opacity="0.5" stroke-width="0.8"/>
<path d="M342.5,228.5H382.5" fill="none" stroke="#111" stroke-width="1.2"/>
<rect x="382" y="213" width="40" height="30" fill="#7b9fd8"/>
<path d="M388.85,224h10.3M388.85,231.95h10.3M393,224v8M398.1,224v8" stroke="#fff" stroke-width="2.15" fill="none"/>
<path d="M401.2,233.1l6.9,-9l6.9,9z" fill="#fff"/>
<circle cx="402.0" cy="218.1" r="2.55" fill="#a7f52d" stroke="#3f6212" stroke-width="0.6"/>
<circle cx="412.0" cy="218.1" r="2.55" fill="#a7f52d" stroke="#3f6212" stroke-width="0.6"/>
<circle cx="392.0" cy="238.1" r="2.55" fill="#a7f52d" stroke="#3f6212" stroke-width="0.6"/>
<rect x="379.90" y="225.85" width="4.9" height="5.1" rx="1.700" fill="#6b6b6b" stroke="#d8d8d8" stroke-opacity="0.5" stroke-width="0.8"/>
<rect x="419.90" y="225.85" width="4.9" height="5.1" rx="1.700" fill="#6b6b6b" stroke="#d8d8d8" stroke-opacity="0.5" stroke-width="0.8"/>
<path d="M422.5,228.5H442.5" fill="none" stroke="#111" stroke-width="1.2"/>
<path d="M452.5,228.5H472.5" fill="none" stroke="#111" stroke-width="1.2"/>
<path d="M447,224V233" stroke="#2b62bd" stroke-width="1.9"/>
<circle cx="447" cy="218.9" r="5" fill="#fff" stroke="#2b62bd" stroke-width="1.9"/>
<path d="M447,216.1v3.3l3.300,1" stroke="#2b62bd" stroke-width="1.5" fill="none"/>
<rect x="445" y="211" width="4" height="1.800" fill="#2b62bd"/>
<path d="M454,218.9h4M457,215l4.400,3.900l-4.400,3.900" stroke="#2b62bd" stroke-width="1.900" fill="none"/>
<rect x="439.60" y="225.85" width="4.9" height="5.1" rx="1.700" fill="#6b6b6b" stroke="#d8d8d8" stroke-opacity="0.5" stroke-width="0.8"/>
<rect x="449.70" y="225.85" width="4.9" height="5.1" rx="1.700" fill="#6b6b6b" stroke="#d8d8d8" stroke-opacity="0.5" stroke-width="0.8"/>
<path d="M492.5,228.5H508c10,0 9,-20 19,-20H542.5" fill="none" stroke="#111" stroke-width="1.2"/>
<path d="M492.5,248.5H542.5" fill="none" stroke="#111" stroke-width="1.2"/>
<path d="M492.5,268.5H508c10,0 9,20 19,20H542.5" fill="none" stroke="#111" stroke-width="1.2"/>
<path d="M469.9,228.2l12.4,-12.4l12.4,12.400l-12.4,12.400z" fill="#4f9cd3"/>
<path d="M482,239.5V308.2h10M482,248.2h10M482,268.2h10M482,288.2h10" stroke="#4f9cd3" stroke-width="2" fill="none"/>
<rect x="469.90" y="225.85" width="4.9" height="5.1" rx="1.700" fill="#6b6b6b" stroke="#d8d8d8" stroke-opacity="0.5" stroke-width="0.8"/>
<rect x="489.90" y="225.85" width="4.9" height="5.1" rx="1.700" fill="#6b6b6b" stroke="#d8d8d8" stroke-opacity="0.5" stroke-width="0.8"/>
<rect x="489.90" y="245.85" width="4.9" height="5.1" rx="1.700" fill="#6b6b6b" stroke="#d8d8d8" stroke-opacity="0.5" stroke-width="0.8"/>
<rect x="489.90" y="265.85" width="4.9" height="5.1" rx="1.700" fill="#6b6b6b" stroke="#d8d8d8" stroke-opacity="0.5" stroke-width="0.8"/>
<circle cx="492.0" cy="288.0" r="2.55" fill="#a7f52d" stroke="#3f6212" stroke-width="0.6"/>
<circle cx="492.0" cy="308.0" r="2.55" fill="#a7f52d" stroke="#3f6212" stroke-width="0.6"/>
<path d="M582.5,208.5H637.5q5,0 5,5V243.5q0,4 4,5q-4,1 -4,5V283.5q0,5 -5,5H582.5" fill="none" stroke="#111" stroke-width="1.2"/>
<path d="M582.5,248.5H697.5" fill="none" stroke="#111" stroke-width="1.2"/>
<rect x="542" y="193" width="40" height="30" fill="#800080"/>
<path d="M572,193L582,203" stroke="#fff" stroke-width="1"/>
<path d="M546.9,197.95h14.2" stroke="#fff" stroke-width="2" fill="none"/>
<path d="M550.9,201h5.2" stroke="#fff" stroke-width="1.8" fill="none"/>
<path d="M552.7,203.7c3,-0.1 4.5,1.3 4.4,3.2c-0.100,2.300 -3.200,3.300 -6.400,2.100l-0.300,-1" stroke="#fff" stroke-width="1.7" fill="none"/>
<circle cx="553.1" cy="214.3" r="2.65" fill="#fff"/>
<path d="M562,208.1h8.5M570,204.1l4.6,4l-4.6,4.100" fill="none" stroke="#fff" stroke-width="2"/>
<circle cx="572.0" cy="218.1" r="2.55" fill="#a7f52d" stroke="#3f6212" stroke-width="0.6"/>
<rect x="539.90" y="205.85" width="4.9" height="5.1" rx="1.700" fill="#6b6b6b" stroke="#d8d8d8" stroke-opacity="0.5" stroke-width="0.8"/>
<rect x="579.90" y="205.85" width="4.9" height="5.1" rx="1.700" fill="#6b6b6b" stroke="#d8d8d8" stroke-opacity="0.5" stroke-width="0.8"/>
<rect x="542" y="233" width="40" height="30" fill="#800080"/>
<path d="M572,233L582,243" stroke="#fff" stroke-width="1"/>
<path d="M546.9,237.95h14.2" stroke="#fff" stroke-width="2" fill="none"/>
<path d="M550.9,241h5.2" stroke="#fff" stroke-width="1.8" fill="none"/>
<path d="M552.7,243.7c3,-0.1 4.5,1.3 4.4,3.2c-0.100,2.300 -3.200,3.300 -6.400,2.100l-0.300,-1" stroke="#fff" stroke-width="1.7" fill="none"/>
<circle cx="553.1" cy="254.3" r="2.65" fill="#fff"/>
<path d="M562,248.1h8.5M570,244.1l4.6,4l-4.6,4.100" fill="none" stroke="#fff" stroke-width="2"/>
<circle cx="572.0" cy="258.1" r="2.55" fill="#a7f52d" stroke="#3f6212" stroke-width="0.6"/>
<rect x="539.90" y="245.85" width="4.9" height="5.1" rx="1.700" fill="#6b6b6b" stroke="#d8d8d8" stroke-opacity="0.5" stroke-width="0.8"/>
<rect x="579.90" y="245.85" width="4.9" height="5.1" rx="1.700" fill="#6b6b6b" stroke="#d8d8d8" stroke-opacity="0.5" stroke-width="0.8"/>
<rect x="542" y="273" width="40" height="30" fill="#800080"/>
<path d="M572,273L582,283" stroke="#fff" stroke-width="1"/>
<path d="M546.9,277.95h14.2" stroke="#fff" stroke-width="2" fill="none"/>
<path d="M550.9,281h5.2" stroke="#fff" stroke-width="1.8" fill="none"/>
<path d="M552.7,283.7c3,-0.1 4.5,1.3 4.4,3.2c-0.100,2.300 -3.200,3.300 -6.400,2.100l-0.300,-1" stroke="#fff" stroke-width="1.7" fill="none"/>
<circle cx="553.1" cy="294.3" r="2.65" fill="#fff"/>
<path d="M562,288.1h8.5M570,284.1l4.6,4l-4.6,4.100" fill="none" stroke="#fff" stroke-width="2"/>
<circle cx="572.0" cy="298.1" r="2.55" fill="#a7f52d" stroke="#3f6212" stroke-width="0.6"/>
<rect x="539.90" y="285.85" width="4.9" height="5.1" rx="1.700" fill="#6b6b6b" stroke="#d8d8d8" stroke-opacity="0.5" stroke-width="0.8"/>
<rect x="579.90" y="285.85" width="4.9" height="5.1" rx="1.700" fill="#6b6b6b" stroke="#d8d8d8" stroke-opacity="0.5" stroke-width="0.8"/>
<path d="M737.5,248.5H792.5" fill="none" stroke="#111" stroke-width="1.2"/>
<rect x="697" y="233" width="40" height="30" fill="#800080"/>
<path d="M727,233L737,243" stroke="#fff" stroke-width="1"/>
<circle cx="710" cy="241.2" r="2.55" fill="#fff"/>
<path d="M715,239.05h8M722.4,235.4l4.6,3.7l-4.6,3.7" fill="none" stroke="#fff" stroke-width="2"/>
<path d="M707,246.1h20" stroke="#fff" stroke-width="1.9"/>
<circle cx="707.05" cy="249.1" r="3.05" fill="none" stroke="#fff" stroke-width="1.85"/>
<circle cx="727" cy="249.1" r="3.05" fill="none" stroke="#fff" stroke-width="1.85"/>
<circle cx="727.0" cy="258.1" r="2.55" fill="#a7f52d" stroke="#3f6212" stroke-width="0.6"/>
<rect x="694.90" y="245.85" width="4.9" height="5.1" rx="1.700" fill="#6b6b6b" stroke="#d8d8d8" stroke-opacity="0.5" stroke-width="0.8"/>
<rect x="734.90" y="245.85" width="4.9" height="5.1" rx="1.700" fill="#6b6b6b" stroke="#d8d8d8" stroke-opacity="0.5" stroke-width="0.8"/>
<path d="M832.5,248.5H872.5" fill="none" stroke="#111" stroke-width="1.2"/>
<rect x="792" y="233" width="40" height="30" fill="#7b9fd8"/>
<path d="M799.8,248.95h8.5M807.2,245.2l4.600,3.800l-4.600,4.100" fill="none" stroke="#fff" stroke-width="2.050"/>
<rect x="813.85" y="239.05" width="2.25" height="14.85" fill="#fff"/>
<rect x="813.85" y="239.05" width="11.250" height="6.100" fill="#fff"/>
<rect x="818.2" y="240.2" width="1.700" height="1.700" fill="#0f4fb5"/>
<rect x="822.15" y="240.2" width="1.700" height="1.700" fill="#0f4fb5"/>
<rect x="816.15" y="242.05" width="1.700" height="1.700" fill="#0f4fb5"/>
<rect x="820.15" y="242.05" width="1.700" height="1.700" fill="#0f4fb5"/>
<rect x="789.90" y="245.85" width="4.9" height="5.1" rx="1.700" fill="#6b6b6b" stroke="#d8d8d8" stroke-opacity="0.5" stroke-width="0.8"/>
<rect x="829.90" y="245.85" width="4.9" height="5.1" rx="1.700" fill="#6b6b6b" stroke="#d8d8d8" stroke-opacity="0.5" stroke-width="0.8"/>
<path d="M912.5,248.5H1037.5q5,0 5,5V313.5q0,5 -5,5H217.5q-5,0 -5,5V343.5q0,5 5,5H232.5" fill="none" stroke="#111" stroke-width="1.2"/>
<rect x="872" y="233" width="40" height="30" fill="#7b9fd8"/>
<path d="M884.9,245.7h14.2l-7.1,9.1z" fill="#fff"/>
<circle cx="902.0" cy="258.1" r="2.55" fill="#a7f52d" stroke="#3f6212" stroke-width="0.6"/>
<rect x="869.90" y="245.85" width="4.9" height="5.1" rx="1.700" fill="#6b6b6b" stroke="#d8d8d8" stroke-opacity="0.5" stroke-width="0.8"/>
<rect x="909.90" y="245.85" width="4.9" height="5.1" rx="1.700" fill="#6b6b6b" stroke="#d8d8d8" stroke-opacity="0.5" stroke-width="0.8"/>
<circle cx="377" cy="273" r="8" fill="url(#vg)"/>
<text x="377.00" y="277.50" font-size="12.5" font-weight="bold" fill="#fff" text-anchor="middle" >V</text>
<text x="390.00" y="276.00" font-size="12" letter-spacing="-0.621" fill="#000" text-anchor="start" >move_WE</text>
<path d="M1002.5,348.5H1037.5q5,0 5,5V373.5q0,5 -5,5H217.5q-5,0 -5,5V403.5q0,5 5,5H232.5" fill="none" stroke="#111" stroke-width="1.2"/>
<path d="M1002.5,408.5H1037.5q5,0 5,5V433.5q0,5 -5,5H217.5q-5,0 -5,5V463.5q0,5 5,5H232.5" fill="none" stroke="#111" stroke-width="1.2"/>
<text x="395.00" y="321.00" font-size="12" letter-spacing="-0.172" fill="#000" text-anchor="start" >hold1</text>
<text x="475.00" y="321.00" font-size="12" letter-spacing="-0.379" fill="#000" text-anchor="start" >DelayRobot_1</text>
<text x="760.00" y="321.00" font-size="12" letter-spacing="-0.219" fill="#000" text-anchor="start" >bearbeitung_BAZ1w</text>
<text x="395.00" y="381.00" font-size="12" letter-spacing="-0.172" fill="#000" text-anchor="start" >hold2</text>
<text x="475.00" y="381.00" font-size="12" letter-spacing="-0.379" fill="#000" text-anchor="start" >DelayRobot_2</text>
<text x="759.00" y="381.00" font-size="12" letter-spacing="-0.219" fill="#000" text-anchor="start" >bearbeitung_BAZ2w</text>
<text x="395.00" y="441.00" font-size="12" letter-spacing="-0.172" fill="#000" text-anchor="start" >hold3</text>
<text x="475.00" y="441.00" font-size="12" letter-spacing="-0.379" fill="#000" text-anchor="start" >DelayRobot_3</text>
<text x="795.00" y="441.00" font-size="12" letter-spacing="-0.818" fill="#000" text-anchor="start" >DelayQS_1</text>
<path d="M272.5,348.5H312.5" fill="none" stroke="#111" stroke-width="1.2"/>
<path d="M352.5,348.5H392.5" fill="none" stroke="#111" stroke-width="1.2"/>
<path d="M432.5,348.5H472.5" fill="none" stroke="#111" stroke-width="1.2"/>
<path d="M512.5,348.5H632.5" fill="none" stroke="#111" stroke-width="1.2"/>
<path d="M672.5,348.5H712.5" fill="none" stroke="#111" stroke-width="1.2"/>
<path d="M752.5,348.5H792.5" fill="none" stroke="#111" stroke-width="1.2"/>
<path d="M832.5,348.5H872.5" fill="none" stroke="#111" stroke-width="1.2"/>
<path d="M912.5,348.5H962.5" fill="none" stroke="#111" stroke-width="1.2"/>
<rect x="232" y="333" width="40" height="30" fill="#7b9fd8"/>
<path d="M238.85,344h10.3M238.85,351.95h10.3M243,344v8M248.1,344v8" stroke="#fff" stroke-width="2.15" fill="none"/>
<path d="M251.2,353.1l6.9,-9l6.9,9z" fill="#fff"/>
<circle cx="252.0" cy="338.1" r="2.55" fill="#a7f52d" stroke="#3f6212" stroke-width="0.6"/>
<circle cx="262.0" cy="338.1" r="2.55" fill="#a7f52d" stroke="#3f6212" stroke-width="0.6"/>
<circle cx="242.0" cy="358.1" r="2.55" fill="#a7f52d" stroke="#3f6212" stroke-width="0.6"/>
<rect x="229.90" y="345.85" width="4.9" height="5.1" rx="1.700" fill="#6b6b6b" stroke="#d8d8d8" stroke-opacity="0.5" stroke-width="0.8"/>
<rect x="269.90" y="345.85" width="4.9" height="5.1" rx="1.700" fill="#6b6b6b" stroke="#d8d8d8" stroke-opacity="0.5" stroke-width="0.8"/>
<rect x="312" y="333" width="40" height="30" fill="#7b9fd8"/>
<path d="M318.85,344h10.3M318.85,351.95h10.3M323,344v8M328.1,344v8" stroke="#fff" stroke-width="2.15" fill="none"/>
<path d="M331.2,353.1l6.9,-9l6.9,9z" fill="#fff"/>
<circle cx="332.0" cy="338.1" r="2.55" fill="#a7f52d" stroke="#3f6212" stroke-width="0.6"/>
<circle cx="342.0" cy="338.1" r="2.55" fill="#a7f52d" stroke="#3f6212" stroke-width="0.6"/>
<circle cx="322.0" cy="358.1" r="2.55" fill="#a7f52d" stroke="#3f6212" stroke-width="0.6"/>
<rect x="309.90" y="345.85" width="4.9" height="5.1" rx="1.700" fill="#6b6b6b" stroke="#d8d8d8" stroke-opacity="0.5" stroke-width="0.8"/>
<rect x="349.90" y="345.85" width="4.9" height="5.1" rx="1.700" fill="#6b6b6b" stroke="#d8d8d8" stroke-opacity="0.5" stroke-width="0.8"/>
<rect x="392" y="333" width="40" height="30" fill="#3567b9"/>
<circle cx="412.1" cy="348.1" r="8" fill="none" stroke="#fff" stroke-width="2.1"/>
<path d="M412.1,343.1V348.4L417.1,350.1" fill="none" stroke="#fff" stroke-width="2.1" stroke-linejoin="round"/>
<rect x="389.90" y="345.85" width="4.9" height="5.1" rx="1.700" fill="#6b6b6b" stroke="#d8d8d8" stroke-opacity="0.5" stroke-width="0.8"/>
<rect x="429.90" y="345.85" width="4.9" height="5.1" rx="1.700" fill="#6b6b6b" stroke="#d8d8d8" stroke-opacity="0.5" stroke-width="0.8"/>
<rect x="472" y="333" width="40" height="30" fill="#3567b9"/>
<circle cx="492.1" cy="348.1" r="8" fill="none" stroke="#fff" stroke-width="2.1"/>
<path d="M492.1,343.1V348.4L497.1,350.1" fill="none" stroke="#fff" stroke-width="2.1" stroke-linejoin="round"/>
<rect x="469.90" y="345.85" width="4.9" height="5.1" rx="1.700" fill="#6b6b6b" stroke="#d8d8d8" stroke-opacity="0.5" stroke-width="0.8"/>
<rect x="509.90" y="345.85" width="4.9" height="5.1" rx="1.700" fill="#6b6b6b" stroke="#d8d8d8" stroke-opacity="0.5" stroke-width="0.8"/>
<rect x="632" y="333" width="40" height="30" fill="#7b9fd8"/>
<path d="M644.9,345.7h14.2l-7.1,9.1z" fill="#fff"/>
<circle cx="662.0" cy="358.1" r="2.55" fill="#a7f52d" stroke="#3f6212" stroke-width="0.6"/>
<rect x="629.90" y="345.85" width="4.9" height="5.1" rx="1.700" fill="#6b6b6b" stroke="#d8d8d8" stroke-opacity="0.5" stroke-width="0.8"/>
<rect x="669.90" y="345.85" width="4.9" height="5.1" rx="1.700" fill="#6b6b6b" stroke="#d8d8d8" stroke-opacity="0.5" stroke-width="0.8"/>
<rect x="712" y="333" width="40" height="30" fill="#800080"/>
<path d="M742,333L752,343" stroke="#fff" stroke-width="1"/>
<circle cx="725" cy="341.2" r="2.55" fill="#fff"/>
<path d="M730,339.05h8M737.4,335.4l4.6,3.7l-4.6,3.7" fill="none" stroke="#fff" stroke-width="2"/>
<path d="M722,346.1h20" stroke="#fff" stroke-width="1.9"/>
<circle cx="722.05" cy="349.1" r="3.05" fill="none" stroke="#fff" stroke-width="1.85"/>
<circle cx="742" cy="349.1" r="3.05" fill="none" stroke="#fff" stroke-width="1.85"/>
<circle cx="742.0" cy="358.1" r="2.55" fill="#a7f52d" stroke="#3f6212" stroke-width="0.6"/>
<rect x="709.90" y="345.85" width="4.9" height="5.1" rx="1.700" fill="#6b6b6b" stroke="#d8d8d8" stroke-opacity="0.5" stroke-width="0.8"/>
<rect x="749.90" y="345.85" width="4.9" height="5.1" rx="1.700" fill="#6b6b6b" stroke="#d8d8d8" stroke-opacity="0.5" stroke-width="0.8"/>
<rect x="792" y="333" width="40" height="30" fill="#3567b9"/>
<circle cx="812.1" cy="348.1" r="8" fill="none" stroke="#fff" stroke-width="2.1"/>
<path d="M812.1,343.1V348.4L817.1,350.1" fill="none" stroke="#fff" stroke-width="2.1" stroke-linejoin="round"/>
<rect x="789.90" y="345.85" width="4.9" height="5.1" rx="1.700" fill="#6b6b6b" stroke="#d8d8d8" stroke-opacity="0.5" stroke-width="0.8"/>
<rect x="829.90" y="345.85" width="4.9" height="5.1" rx="1.700" fill="#6b6b6b" stroke="#d8d8d8" stroke-opacity="0.5" stroke-width="0.8"/>
<rect x="872" y="333" width="40" height="30" fill="#800080"/>
<path d="M902,333L912,343" stroke="#fff" stroke-width="1"/>
<circle cx="885" cy="341.2" r="2.55" fill="#fff"/>
<path d="M890,339.05h8M897.4,335.4l4.6,3.7l-4.6,3.7" fill="none" stroke="#fff" stroke-width="2"/>
<path d="M882,346.1h20" stroke="#fff" stroke-width="1.9"/>
<circle cx="882.05" cy="349.1" r="3.05" fill="none" stroke="#fff" stroke-width="1.85"/>
<circle cx="902" cy="349.1" r="3.05" fill="none" stroke="#fff" stroke-width="1.85"/>
<circle cx="902.0" cy="358.1" r="2.55" fill="#a7f52d" stroke="#3f6212" stroke-width="0.6"/>
<rect x="869.90" y="345.85" width="4.9" height="5.1" rx="1.700" fill="#6b6b6b" stroke="#d8d8d8" stroke-opacity="0.5" stroke-width="0.8"/>
<rect x="909.90" y="345.85" width="4.9" height="5.1" rx="1.700" fill="#6b6b6b" stroke="#d8d8d8" stroke-opacity="0.5" stroke-width="0.8"/>
<rect x="962" y="333" width="40" height="30" fill="#7b9fd8"/>
<path d="M971.8,344h19.3M971.8,353.05h19.3M975.9,344v9M982.9,344v9M990,344v9" stroke="#fff" stroke-width="2.2" fill="none"/>
<circle cx="982.0" cy="338.1" r="2.55" fill="#a7f52d" stroke="#3f6212" stroke-width="0.6"/>
<circle cx="992.0" cy="338.1" r="2.55" fill="#a7f52d" stroke="#3f6212" stroke-width="0.6"/>
<rect x="959.90" y="345.85" width="4.9" height="5.1" rx="1.700" fill="#6b6b6b" stroke="#d8d8d8" stroke-opacity="0.5" stroke-width="0.8"/>
<rect x="999.90" y="345.85" width="4.9" height="5.1" rx="1.700" fill="#6b6b6b" stroke="#d8d8d8" stroke-opacity="0.5" stroke-width="0.8"/>
<path d="M272.5,408.5H312.5" fill="none" stroke="#111" stroke-width="1.2"/>
<path d="M352.5,408.5H392.5" fill="none" stroke="#111" stroke-width="1.2"/>
<path d="M432.5,408.5H472.5" fill="none" stroke="#111" stroke-width="1.2"/>
<path d="M512.5,408.5H552.5" fill="none" stroke="#111" stroke-width="1.2"/>
<path d="M592.5,408.5H632.5" fill="none" stroke="#111" stroke-width="1.2"/>
<path d="M672.5,408.5H712.5" fill="none" stroke="#111" stroke-width="1.2"/>
<path d="M752.5,408.5H792.5" fill="none" stroke="#111" stroke-width="1.2"/>
<path d="M832.5,408.5H872.5" fill="none" stroke="#111" stroke-width="1.2"/>
<path d="M912.5,408.5H962.5" fill="none" stroke="#111" stroke-width="1.2"/>
<rect x="232" y="393" width="40" height="30" fill="#7b9fd8"/>
<path d="M238.85,404h10.3M238.85,411.95h10.3M243,404v8M248.1,404v8" stroke="#fff" stroke-width="2.15" fill="none"/>
<path d="M251.2,413.1l6.9,-9l6.9,9z" fill="#fff"/>
<circle cx="252.0" cy="398.1" r="2.55" fill="#a7f52d" stroke="#3f6212" stroke-width="0.6"/>
<circle cx="262.0" cy="398.1" r="2.55" fill="#a7f52d" stroke="#3f6212" stroke-width="0.6"/>
<circle cx="242.0" cy="418.1" r="2.55" fill="#a7f52d" stroke="#3f6212" stroke-width="0.6"/>
<rect x="229.90" y="405.85" width="4.9" height="5.1" rx="1.700" fill="#6b6b6b" stroke="#d8d8d8" stroke-opacity="0.5" stroke-width="0.8"/>
<rect x="269.90" y="405.85" width="4.9" height="5.1" rx="1.700" fill="#6b6b6b" stroke="#d8d8d8" stroke-opacity="0.5" stroke-width="0.8"/>
<rect x="312" y="393" width="40" height="30" fill="#7b9fd8"/>
<path d="M318.85,404h10.3M318.85,411.95h10.3M323,404v8M328.1,404v8" stroke="#fff" stroke-width="2.15" fill="none"/>
<path d="M331.2,413.1l6.9,-9l6.9,9z" fill="#fff"/>
<circle cx="332.0" cy="398.1" r="2.55" fill="#a7f52d" stroke="#3f6212" stroke-width="0.6"/>
<circle cx="342.0" cy="398.1" r="2.55" fill="#a7f52d" stroke="#3f6212" stroke-width="0.6"/>
<circle cx="322.0" cy="418.1" r="2.55" fill="#a7f52d" stroke="#3f6212" stroke-width="0.6"/>
<rect x="309.90" y="405.85" width="4.9" height="5.1" rx="1.700" fill="#6b6b6b" stroke="#d8d8d8" stroke-opacity="0.5" stroke-width="0.8"/>
<rect x="349.90" y="405.85" width="4.9" height="5.1" rx="1.700" fill="#6b6b6b" stroke="#d8d8d8" stroke-opacity="0.5" stroke-width="0.8"/>
<rect x="392" y="393" width="40" height="30" fill="#3567b9"/>
<circle cx="412.1" cy="408.1" r="8" fill="none" stroke="#fff" stroke-width="2.1"/>
<path d="M412.1,403.1V408.4L417.1,410.1" fill="none" stroke="#fff" stroke-width="2.1" stroke-linejoin="round"/>
<rect x="389.90" y="405.85" width="4.9" height="5.1" rx="1.700" fill="#6b6b6b" stroke="#d8d8d8" stroke-opacity="0.5" stroke-width="0.8"/>
<rect x="429.90" y="405.85" width="4.9" height="5.1" rx="1.700" fill="#6b6b6b" stroke="#d8d8d8" stroke-opacity="0.5" stroke-width="0.8"/>
<rect x="472" y="393" width="40" height="30" fill="#3567b9"/>
<circle cx="492.1" cy="408.1" r="8" fill="none" stroke="#fff" stroke-width="2.1"/>
<path d="M492.1,403.1V408.4L497.1,410.1" fill="none" stroke="#fff" stroke-width="2.1" stroke-linejoin="round"/>
<rect x="469.90" y="405.85" width="4.9" height="5.1" rx="1.700" fill="#6b6b6b" stroke="#d8d8d8" stroke-opacity="0.5" stroke-width="0.8"/>
<rect x="509.90" y="405.85" width="4.9" height="5.1" rx="1.700" fill="#6b6b6b" stroke="#d8d8d8" stroke-opacity="0.5" stroke-width="0.8"/>
<rect x="552" y="393" width="40" height="30" fill="#7b9fd8"/>
<path d="M564.9,405.7h14.2l-7.1,9.1z" fill="#fff"/>
<circle cx="582.0" cy="418.1" r="2.55" fill="#a7f52d" stroke="#3f6212" stroke-width="0.6"/>
<rect x="549.90" y="405.85" width="4.9" height="5.1" rx="1.700" fill="#6b6b6b" stroke="#d8d8d8" stroke-opacity="0.5" stroke-width="0.8"/>
<rect x="589.90" y="405.85" width="4.9" height="5.1" rx="1.700" fill="#6b6b6b" stroke="#d8d8d8" stroke-opacity="0.5" stroke-width="0.8"/>
<rect x="632" y="393" width="40" height="30" fill="#7b9fd8"/>
<path d="M644.9,405.7h14.2l-7.1,9.1z" fill="#fff"/>
<circle cx="662.0" cy="418.1" r="2.55" fill="#a7f52d" stroke="#3f6212" stroke-width="0.6"/>
<rect x="629.90" y="405.85" width="4.9" height="5.1" rx="1.700" fill="#6b6b6b" stroke="#d8d8d8" stroke-opacity="0.5" stroke-width="0.8"/>
<rect x="669.90" y="405.85" width="4.9" height="5.1" rx="1.700" fill="#6b6b6b" stroke="#d8d8d8" stroke-opacity="0.5" stroke-width="0.8"/>
<rect x="712" y="393" width="40" height="30" fill="#800080"/>
<path d="M742,393L752,403" stroke="#fff" stroke-width="1"/>
<circle cx="725" cy="401.2" r="2.55" fill="#fff"/>
<path d="M730,399.05h8M737.4,395.4l4.6,3.7l-4.6,3.7" fill="none" stroke="#fff" stroke-width="2"/>
<path d="M722,406.1h20" stroke="#fff" stroke-width="1.9"/>
<circle cx="722.05" cy="409.1" r="3.05" fill="none" stroke="#fff" stroke-width="1.85"/>
<circle cx="742" cy="409.1" r="3.05" fill="none" stroke="#fff" stroke-width="1.85"/>
<circle cx="742.0" cy="418.1" r="2.55" fill="#a7f52d" stroke="#3f6212" stroke-width="0.6"/>
<rect x="709.90" y="405.85" width="4.9" height="5.1" rx="1.700" fill="#6b6b6b" stroke="#d8d8d8" stroke-opacity="0.5" stroke-width="0.8"/>
<rect x="749.90" y="405.85" width="4.9" height="5.1" rx="1.700" fill="#6b6b6b" stroke="#d8d8d8" stroke-opacity="0.5" stroke-width="0.8"/>
<rect x="792" y="393" width="40" height="30" fill="#3567b9"/>
<circle cx="812.1" cy="408.1" r="8" fill="none" stroke="#fff" stroke-width="2.1"/>
<path d="M812.1,403.1V408.4L817.1,410.1" fill="none" stroke="#fff" stroke-width="2.1" stroke-linejoin="round"/>
<rect x="789.90" y="405.85" width="4.9" height="5.1" rx="1.700" fill="#6b6b6b" stroke="#d8d8d8" stroke-opacity="0.5" stroke-width="0.8"/>
<rect x="829.90" y="405.85" width="4.9" height="5.1" rx="1.700" fill="#6b6b6b" stroke="#d8d8d8" stroke-opacity="0.5" stroke-width="0.8"/>
<rect x="872" y="393" width="40" height="30" fill="#800080"/>
<path d="M902,393L912,403" stroke="#fff" stroke-width="1"/>
<circle cx="885" cy="401.2" r="2.55" fill="#fff"/>
<path d="M890,399.05h8M897.4,395.4l4.6,3.7l-4.6,3.7" fill="none" stroke="#fff" stroke-width="2"/>
<path d="M882,406.1h20" stroke="#fff" stroke-width="1.9"/>
<circle cx="882.05" cy="409.1" r="3.05" fill="none" stroke="#fff" stroke-width="1.85"/>
<circle cx="902" cy="409.1" r="3.05" fill="none" stroke="#fff" stroke-width="1.85"/>
<circle cx="902.0" cy="418.1" r="2.55" fill="#a7f52d" stroke="#3f6212" stroke-width="0.6"/>
<rect x="869.90" y="405.85" width="4.9" height="5.1" rx="1.700" fill="#6b6b6b" stroke="#d8d8d8" stroke-opacity="0.5" stroke-width="0.8"/>
<rect x="909.90" y="405.85" width="4.9" height="5.1" rx="1.700" fill="#6b6b6b" stroke="#d8d8d8" stroke-opacity="0.5" stroke-width="0.8"/>
<rect x="962" y="393" width="40" height="30" fill="#7b9fd8"/>
<path d="M971.8,404h19.3M971.8,413.05h19.3M975.9,404v9M982.9,404v9M990,404v9" stroke="#fff" stroke-width="2.2" fill="none"/>
<circle cx="982.0" cy="398.1" r="2.55" fill="#a7f52d" stroke="#3f6212" stroke-width="0.6"/>
<circle cx="992.0" cy="398.1" r="2.55" fill="#a7f52d" stroke="#3f6212" stroke-width="0.6"/>
<rect x="959.90" y="405.85" width="4.9" height="5.1" rx="1.700" fill="#6b6b6b" stroke="#d8d8d8" stroke-opacity="0.5" stroke-width="0.8"/>
<rect x="999.90" y="405.85" width="4.9" height="5.1" rx="1.700" fill="#6b6b6b" stroke="#d8d8d8" stroke-opacity="0.5" stroke-width="0.8"/>
<path d="M272.5,468.5H312.5" fill="none" stroke="#111" stroke-width="1.2"/>
<path d="M352.5,468.5H392.5" fill="none" stroke="#111" stroke-width="1.2"/>
<path d="M432.5,468.5H472.5" fill="none" stroke="#111" stroke-width="1.2"/>
<path d="M512.5,468.5H552.5" fill="none" stroke="#111" stroke-width="1.2"/>
<path d="M592.5,468.5H632.5" fill="none" stroke="#111" stroke-width="1.2"/>
<path d="M672.5,468.5H712.5" fill="none" stroke="#111" stroke-width="1.2"/>
<path d="M752.5,468.5H792.5" fill="none" stroke="#111" stroke-width="1.2"/>
<path d="M832.5,468.5H872.5" fill="none" stroke="#111" stroke-width="1.2"/>
<rect x="232" y="453" width="40" height="30" fill="#7b9fd8"/>
<path d="M238.85,464h10.3M238.85,471.95h10.3M243,464v8M248.1,464v8" stroke="#fff" stroke-width="2.15" fill="none"/>
<path d="M251.2,473.1l6.9,-9l6.9,9z" fill="#fff"/>
<circle cx="252.0" cy="458.1" r="2.55" fill="#a7f52d" stroke="#3f6212" stroke-width="0.6"/>
<circle cx="262.0" cy="458.1" r="2.55" fill="#a7f52d" stroke="#3f6212" stroke-width="0.6"/>
<circle cx="242.0" cy="478.1" r="2.55" fill="#a7f52d" stroke="#3f6212" stroke-width="0.6"/>
<rect x="229.90" y="465.85" width="4.9" height="5.1" rx="1.700" fill="#6b6b6b" stroke="#d8d8d8" stroke-opacity="0.5" stroke-width="0.8"/>
<rect x="269.90" y="465.85" width="4.9" height="5.1" rx="1.700" fill="#6b6b6b" stroke="#d8d8d8" stroke-opacity="0.5" stroke-width="0.8"/>
<rect x="312" y="453" width="40" height="30" fill="#7b9fd8"/>
<path d="M318.85,464h10.3M318.85,471.95h10.3M323,464v8M328.1,464v8" stroke="#fff" stroke-width="2.15" fill="none"/>
<path d="M331.2,473.1l6.9,-9l6.9,9z" fill="#fff"/>
<circle cx="332.0" cy="458.1" r="2.55" fill="#a7f52d" stroke="#3f6212" stroke-width="0.6"/>
<circle cx="342.0" cy="458.1" r="2.55" fill="#a7f52d" stroke="#3f6212" stroke-width="0.6"/>
<circle cx="322.0" cy="478.1" r="2.55" fill="#a7f52d" stroke="#3f6212" stroke-width="0.6"/>
<rect x="309.90" y="465.85" width="4.9" height="5.1" rx="1.700" fill="#6b6b6b" stroke="#d8d8d8" stroke-opacity="0.5" stroke-width="0.8"/>
<rect x="349.90" y="465.85" width="4.9" height="5.1" rx="1.700" fill="#6b6b6b" stroke="#d8d8d8" stroke-opacity="0.5" stroke-width="0.8"/>
<rect x="392" y="453" width="40" height="30" fill="#3567b9"/>
<circle cx="412.1" cy="468.1" r="8" fill="none" stroke="#fff" stroke-width="2.1"/>
<path d="M412.1,463.1V468.4L417.1,470.1" fill="none" stroke="#fff" stroke-width="2.1" stroke-linejoin="round"/>
<rect x="389.90" y="465.85" width="4.9" height="5.1" rx="1.700" fill="#6b6b6b" stroke="#d8d8d8" stroke-opacity="0.5" stroke-width="0.8"/>
<rect x="429.90" y="465.85" width="4.9" height="5.1" rx="1.700" fill="#6b6b6b" stroke="#d8d8d8" stroke-opacity="0.5" stroke-width="0.8"/>
<rect x="472" y="453" width="40" height="30" fill="#3567b9"/>
<circle cx="492.1" cy="468.1" r="8" fill="none" stroke="#fff" stroke-width="2.1"/>
<path d="M492.1,463.1V468.4L497.1,470.1" fill="none" stroke="#fff" stroke-width="2.1" stroke-linejoin="round"/>
<rect x="469.90" y="465.85" width="4.9" height="5.1" rx="1.700" fill="#6b6b6b" stroke="#d8d8d8" stroke-opacity="0.5" stroke-width="0.8"/>
<rect x="509.90" y="465.85" width="4.9" height="5.1" rx="1.700" fill="#6b6b6b" stroke="#d8d8d8" stroke-opacity="0.5" stroke-width="0.8"/>
<rect x="552" y="453" width="40" height="30" fill="#7b9fd8"/>
<path d="M564.9,465.7h14.2l-7.1,9.1z" fill="#fff"/>
<circle cx="582.0" cy="478.1" r="2.55" fill="#a7f52d" stroke="#3f6212" stroke-width="0.6"/>
<rect x="549.90" y="465.85" width="4.9" height="5.1" rx="1.700" fill="#6b6b6b" stroke="#d8d8d8" stroke-opacity="0.5" stroke-width="0.8"/>
<rect x="589.90" y="465.85" width="4.9" height="5.1" rx="1.700" fill="#6b6b6b" stroke="#d8d8d8" stroke-opacity="0.5" stroke-width="0.8"/>
<rect x="632" y="453" width="40" height="30" fill="#7b9fd8"/>
<path d="M644.9,465.7h14.2l-7.1,9.1z" fill="#fff"/>
<circle cx="662.0" cy="478.1" r="2.55" fill="#a7f52d" stroke="#3f6212" stroke-width="0.6"/>
<rect x="629.90" y="465.85" width="4.9" height="5.1" rx="1.700" fill="#6b6b6b" stroke="#d8d8d8" stroke-opacity="0.5" stroke-width="0.8"/>
<rect x="669.90" y="465.85" width="4.9" height="5.1" rx="1.700" fill="#6b6b6b" stroke="#d8d8d8" stroke-opacity="0.5" stroke-width="0.8"/>
<rect x="712" y="453" width="40" height="30" fill="#800080"/>
<path d="M742,453L752,463" stroke="#fff" stroke-width="1"/>
<circle cx="725" cy="461.2" r="2.55" fill="#fff"/>
<path d="M730,459.05h8M737.4,455.4l4.6,3.7l-4.6,3.7" fill="none" stroke="#fff" stroke-width="2"/>
<path d="M722,466.1h20" stroke="#fff" stroke-width="1.9"/>
<circle cx="722.05" cy="469.1" r="3.05" fill="none" stroke="#fff" stroke-width="1.85"/>
<circle cx="742" cy="469.1" r="3.05" fill="none" stroke="#fff" stroke-width="1.85"/>
<circle cx="742.0" cy="478.1" r="2.55" fill="#a7f52d" stroke="#3f6212" stroke-width="0.6"/>
<rect x="709.90" y="465.85" width="4.9" height="5.1" rx="1.700" fill="#6b6b6b" stroke="#d8d8d8" stroke-opacity="0.5" stroke-width="0.8"/>
<rect x="749.90" y="465.85" width="4.9" height="5.1" rx="1.700" fill="#6b6b6b" stroke="#d8d8d8" stroke-opacity="0.5" stroke-width="0.8"/>
<rect x="792" y="453" width="40" height="30" fill="#3567b9"/>
<circle cx="812.1" cy="468.1" r="8" fill="none" stroke="#fff" stroke-width="2.1"/>
<path d="M812.1,463.1V468.4L817.1,470.1" fill="none" stroke="#fff" stroke-width="2.1" stroke-linejoin="round"/>
<rect x="789.90" y="465.85" width="4.9" height="5.1" rx="1.700" fill="#6b6b6b" stroke="#d8d8d8" stroke-opacity="0.5" stroke-width="0.8"/>
<rect x="829.90" y="465.85" width="4.9" height="5.1" rx="1.700" fill="#6b6b6b" stroke="#d8d8d8" stroke-opacity="0.5" stroke-width="0.8"/>
<rect x="872" y="453" width="40" height="30" fill="#7b9fd8"/>
<path d="M884.9,465.7h14.2l-7.1,9.1z" fill="#fff"/>
<circle cx="902.0" cy="478.1" r="2.55" fill="#a7f52d" stroke="#3f6212" stroke-width="0.6"/>
<rect x="869.90" y="465.85" width="4.9" height="5.1" rx="1.700" fill="#6b6b6b" stroke="#d8d8d8" stroke-opacity="0.5" stroke-width="0.8"/>
<rect x="909.90" y="465.85" width="4.9" height="5.1" rx="1.700" fill="#6b6b6b" stroke="#d8d8d8" stroke-opacity="0.5" stroke-width="0.8"/>
<path d="M912.5,468.5H952.5" fill="none" stroke="#111" stroke-width="1.2"/>
<path d="M962.5,468.5H982.5" fill="none" stroke="#111" stroke-width="1.2"/>
<path d="M957.3,463.5V472.7" stroke="#2b62bd" stroke-width="1.9"/>
<circle cx="957.3" cy="459.2" r="5" fill="#fff" stroke="#2b62bd" stroke-width="1.9"/>
<path d="M957.3,456.4v3.3l3.300,1" stroke="#2b62bd" stroke-width="1.5" fill="none"/>
<rect x="955.3" y="451.3" width="4" height="1.800" fill="#2b62bd"/>
<path d="M941.3,459.2h4M944.3,455.3l4.400,3.900l-4.400,3.900" stroke="#2b62bd" stroke-width="1.900" fill="none"/>
<rect x="949.60" y="465.85" width="4.9" height="5.1" rx="1.700" fill="#6b6b6b" stroke="#d8d8d8" stroke-opacity="0.5" stroke-width="0.8"/>
<rect x="959.70" y="465.85" width="4.9" height="5.1" rx="1.700" fill="#6b6b6b" stroke="#d8d8d8" stroke-opacity="0.5" stroke-width="0.8"/>
<path d="M981,467H1004.5V490.5z" fill="#7b9fd8"/>
<path d="M996.5,480.5h5.4m-2.7,-2.7v5.4" stroke="#fff" stroke-width="1.7" fill="none"/>
<path d="M1002.5,468.5H1082.5" fill="none" stroke="#111" stroke-width="1.2"/>
<path d="M1002.5,488.5V513.5q0,5 5,5H1022.5" fill="none" stroke="#111" stroke-width="1.2"/>
<rect x="979.90" y="465.85" width="4.9" height="5.1" rx="1.700" fill="#6b6b6b" stroke="#d8d8d8" stroke-opacity="0.5" stroke-width="0.8"/>
<rect x="999.90" y="465.85" width="4.9" height="5.1" rx="1.700" fill="#6b6b6b" stroke="#d8d8d8" stroke-opacity="0.5" stroke-width="0.8"/>
<rect x="999.90" y="485.85" width="4.9" height="5.1" rx="1.700" fill="#6b6b6b" stroke="#d8d8d8" stroke-opacity="0.5" stroke-width="0.8"/>
<path d="M1062.5,518.5H1082.5" fill="none" stroke="#111" stroke-width="1.2"/>
<rect x="1022" y="503" width="40" height="30" fill="#3567b9"/>
<circle cx="1042.1" cy="518.1" r="8" fill="none" stroke="#fff" stroke-width="2.1"/>
<path d="M1042.1,513.1V518.4L1047.1,520.1" fill="none" stroke="#fff" stroke-width="2.1" stroke-linejoin="round"/>
<rect x="1019.90" y="515.85" width="4.9" height="5.1" rx="1.700" fill="#6b6b6b" stroke="#d8d8d8" stroke-opacity="0.5" stroke-width="0.8"/>
<rect x="1059.90" y="515.85" width="4.9" height="5.1" rx="1.700" fill="#6b6b6b" stroke="#d8d8d8" stroke-opacity="0.5" stroke-width="0.8"/>
<circle cx="1092.3" cy="468.2" r="12" fill="#4f9cd3"/>
<path d="M1087.8,463.7l9,9m0,-9l-9,9" stroke="#fff" stroke-width="1.9" fill="none"/>
<rect x="1079.90" y="465.85" width="4.9" height="5.1" rx="1.700" fill="#6b6b6b" stroke="#d8d8d8" stroke-opacity="0.5" stroke-width="0.8"/>
<circle cx="1092.3" cy="518.2" r="12" fill="#4f9cd3"/>
<path d="M1087.8,513.7l9,9m0,-9l-9,9" stroke="#fff" stroke-width="1.9" fill="none"/>
<rect x="1079.90" y="515.85" width="4.9" height="5.1" rx="1.700" fill="#6b6b6b" stroke="#d8d8d8" stroke-opacity="0.5" stroke-width="0.8"/>
<path d="M160,617L192.5,638.5M160,638.5H192.5M160,660L192.5,638.5" fill="none" stroke="#111" stroke-width="1.2"/>
<circle cx="202.3" cy="638.2" r="12" fill="#4f9cd3"/>
<path d="M197.8,633.7l9,9m0,-9l-9,9" stroke="#fff" stroke-width="1.9" fill="none"/>
<rect x="189.90" y="635.85" width="4.9" height="5.1" rx="1.700" fill="#6b6b6b" stroke="#d8d8d8" stroke-opacity="0.5" stroke-width="0.8"/>
<circle cx="252.3" cy="638.2" r="12" fill="#4f9cd3"/>
<path d="M244.3,638.2h6m-3,-3v6" stroke="#fff" stroke-width="2" fill="none"/>
<path d="M252.8,634l4.200,4.200l-4.200,4.200" stroke="#fff" stroke-width="2" fill="none"/>
<rect x="259.90" y="635.85" width="4.9" height="5.1" rx="1.700" fill="#6b6b6b" stroke="#d8d8d8" stroke-opacity="0.5" stroke-width="0.8"/>
<path d="M262.5,638.5H302.5" fill="none" stroke="#111" stroke-width="1.2"/>
<rect x="302" y="623" width="40" height="30" fill="#7b9fd8"/>
<path d="M311.8,634h19.3M311.8,643.05h19.3M315.9,634v9M322.9,634v9M330,634v9" stroke="#fff" stroke-width="2.2" fill="none"/>
<circle cx="322.0" cy="628.1" r="2.55" fill="#a7f52d" stroke="#3f6212" stroke-width="0.6"/>
<circle cx="332.0" cy="628.1" r="2.55" fill="#a7f52d" stroke="#3f6212" stroke-width="0.6"/>
<rect x="299.90" y="635.85" width="4.9" height="5.1" rx="1.700" fill="#6b6b6b" stroke="#d8d8d8" stroke-opacity="0.5" stroke-width="0.8"/>
<rect x="339.90" y="635.85" width="4.9" height="5.1" rx="1.700" fill="#6b6b6b" stroke="#d8d8d8" stroke-opacity="0.5" stroke-width="0.8"/>
<path d="M342.5,638.5H382.5" fill="none" stroke="#111" stroke-width="1.2"/>
<rect x="382" y="623" width="40" height="30" fill="#7b9fd8"/>
<path d="M388.85,634h10.3M388.85,641.95h10.3M393,634v8M398.1,634v8" stroke="#fff" stroke-width="2.15" fill="none"/>
<path d="M401.2,643.1l6.9,-9l6.9,9z" fill="#fff"/>
<circle cx="402.0" cy="628.1" r="2.55" fill="#a7f52d" stroke="#3f6212" stroke-width="0.6"/>
<circle cx="412.0" cy="628.1" r="2.55" fill="#a7f52d" stroke="#3f6212" stroke-width="0.6"/>
<circle cx="392.0" cy="648.1" r="2.55" fill="#a7f52d" stroke="#3f6212" stroke-width="0.6"/>
<rect x="379.90" y="635.85" width="4.9" height="5.1" rx="1.700" fill="#6b6b6b" stroke="#d8d8d8" stroke-opacity="0.5" stroke-width="0.8"/>
<rect x="419.90" y="635.85" width="4.9" height="5.1" rx="1.700" fill="#6b6b6b" stroke="#d8d8d8" stroke-opacity="0.5" stroke-width="0.8"/>
<path d="M422.5,638.5H442.5" fill="none" stroke="#111" stroke-width="1.2"/>
<path d="M452.5,638.5H472.5" fill="none" stroke="#111" stroke-width="1.2"/>
<path d="M447,634V643" stroke="#2b62bd" stroke-width="1.9"/>
<circle cx="447" cy="628.9" r="5" fill="#fff" stroke="#2b62bd" stroke-width="1.9"/>
<path d="M447,626.1v3.3l3.300,1" stroke="#2b62bd" stroke-width="1.5" fill="none"/>
<rect x="445" y="621" width="4" height="1.800" fill="#2b62bd"/>
<path d="M454,628.9h4M457,625l4.400,3.900l-4.400,3.900" stroke="#2b62bd" stroke-width="1.900" fill="none"/>
<rect x="439.60" y="635.85" width="4.9" height="5.1" rx="1.700" fill="#6b6b6b" stroke="#d8d8d8" stroke-opacity="0.5" stroke-width="0.8"/>
<rect x="449.70" y="635.85" width="4.9" height="5.1" rx="1.700" fill="#6b6b6b" stroke="#d8d8d8" stroke-opacity="0.5" stroke-width="0.8"/>
<path d="M492.5,638.5H508c10,0 9,-20 19,-20H542.5" fill="none" stroke="#111" stroke-width="1.2"/>
<path d="M492.5,658.5H542.5" fill="none" stroke="#111" stroke-width="1.2"/>
<path d="M492.5,678.5H508c10,0 9,20 19,20H542.5" fill="none" stroke="#111" stroke-width="1.2"/>
<path d="M469.9,638.2l12.4,-12.4l12.4,12.400l-12.4,12.400z" fill="#4f9cd3"/>
<path d="M482,649.5V718.2h10M482,658.2h10M482,678.2h10M482,698.2h10" stroke="#4f9cd3" stroke-width="2" fill="none"/>
<rect x="469.90" y="635.85" width="4.9" height="5.1" rx="1.700" fill="#6b6b6b" stroke="#d8d8d8" stroke-opacity="0.5" stroke-width="0.8"/>
<rect x="489.90" y="635.85" width="4.9" height="5.1" rx="1.700" fill="#6b6b6b" stroke="#d8d8d8" stroke-opacity="0.5" stroke-width="0.8"/>
<rect x="489.90" y="655.85" width="4.9" height="5.1" rx="1.700" fill="#6b6b6b" stroke="#d8d8d8" stroke-opacity="0.5" stroke-width="0.8"/>
<rect x="489.90" y="675.85" width="4.9" height="5.1" rx="1.700" fill="#6b6b6b" stroke="#d8d8d8" stroke-opacity="0.5" stroke-width="0.8"/>
<circle cx="492.0" cy="698.0" r="2.55" fill="#a7f52d" stroke="#3f6212" stroke-width="0.6"/>
<circle cx="492.0" cy="718.0" r="2.55" fill="#a7f52d" stroke="#3f6212" stroke-width="0.6"/>
<path d="M582.5,618.5H637.5q5,0 5,5V653.5q0,4 4,5q-4,1 -4,5V693.5q0,5 -5,5H582.5" fill="none" stroke="#111" stroke-width="1.2"/>
<path d="M582.5,658.5H702.5" fill="none" stroke="#111" stroke-width="1.2"/>
<rect x="542" y="603" width="40" height="30" fill="#800080"/>
<path d="M572,603L582,613" stroke="#fff" stroke-width="1"/>
<path d="M546.9,607.95h14.2" stroke="#fff" stroke-width="2" fill="none"/>
<path d="M550.9,611h5.2" stroke="#fff" stroke-width="1.8" fill="none"/>
<path d="M552.7,613.7c3,-0.1 4.5,1.3 4.4,3.2c-0.100,2.300 -3.200,3.300 -6.400,2.100l-0.300,-1" stroke="#fff" stroke-width="1.7" fill="none"/>
<circle cx="553.1" cy="624.3" r="2.65" fill="#fff"/>
<path d="M562,618.1h8.5M570,614.1l4.6,4l-4.6,4.100" fill="none" stroke="#fff" stroke-width="2"/>
<circle cx="572.0" cy="628.1" r="2.55" fill="#a7f52d" stroke="#3f6212" stroke-width="0.6"/>
<rect x="539.90" y="615.85" width="4.9" height="5.1" rx="1.700" fill="#6b6b6b" stroke="#d8d8d8" stroke-opacity="0.5" stroke-width="0.8"/>
<rect x="579.90" y="615.85" width="4.9" height="5.1" rx="1.700" fill="#6b6b6b" stroke="#d8d8d8" stroke-opacity="0.5" stroke-width="0.8"/>
<rect x="542" y="643" width="40" height="30" fill="#800080"/>
<path d="M572,643L582,653" stroke="#fff" stroke-width="1"/>
<path d="M546.9,647.95h14.2" stroke="#fff" stroke-width="2" fill="none"/>
<path d="M550.9,651h5.2" stroke="#fff" stroke-width="1.8" fill="none"/>
<path d="M552.7,653.7c3,-0.1 4.5,1.3 4.4,3.2c-0.100,2.300 -3.200,3.300 -6.400,2.100l-0.300,-1" stroke="#fff" stroke-width="1.7" fill="none"/>
<circle cx="553.1" cy="664.3" r="2.65" fill="#fff"/>
<path d="M562,658.1h8.5M570,654.1l4.6,4l-4.6,4.100" fill="none" stroke="#fff" stroke-width="2"/>
<circle cx="572.0" cy="668.1" r="2.55" fill="#a7f52d" stroke="#3f6212" stroke-width="0.6"/>
<rect x="539.90" y="655.85" width="4.9" height="5.1" rx="1.700" fill="#6b6b6b" stroke="#d8d8d8" stroke-opacity="0.5" stroke-width="0.8"/>
<rect x="579.90" y="655.85" width="4.9" height="5.1" rx="1.700" fill="#6b6b6b" stroke="#d8d8d8" stroke-opacity="0.5" stroke-width="0.8"/>
<rect x="542" y="683" width="40" height="30" fill="#800080"/>
<path d="M572,683L582,693" stroke="#fff" stroke-width="1"/>
<path d="M546.9,687.95h14.2" stroke="#fff" stroke-width="2" fill="none"/>
<path d="M550.9,691h5.2" stroke="#fff" stroke-width="1.8" fill="none"/>
<path d="M552.7,693.7c3,-0.1 4.5,1.3 4.4,3.2c-0.100,2.300 -3.200,3.300 -6.400,2.100l-0.300,-1" stroke="#fff" stroke-width="1.7" fill="none"/>
<circle cx="553.1" cy="704.3" r="2.65" fill="#fff"/>
<path d="M562,698.1h8.5M570,694.1l4.6,4l-4.6,4.100" fill="none" stroke="#fff" stroke-width="2"/>
<circle cx="572.0" cy="708.1" r="2.55" fill="#a7f52d" stroke="#3f6212" stroke-width="0.6"/>
<rect x="539.90" y="695.85" width="4.9" height="5.1" rx="1.700" fill="#6b6b6b" stroke="#d8d8d8" stroke-opacity="0.5" stroke-width="0.8"/>
<rect x="579.90" y="695.85" width="4.9" height="5.1" rx="1.700" fill="#6b6b6b" stroke="#d8d8d8" stroke-opacity="0.5" stroke-width="0.8"/>
<path d="M742.5,658.5H792.5" fill="none" stroke="#111" stroke-width="1.2"/>
<rect x="702" y="643" width="40" height="30" fill="#800080"/>
<path d="M732,643L742,653" stroke="#fff" stroke-width="1"/>
<circle cx="715" cy="651.2" r="2.55" fill="#fff"/>
<path d="M720,649.05h8M727.4,645.4l4.6,3.7l-4.6,3.7" fill="none" stroke="#fff" stroke-width="2"/>
<path d="M712,656.1h20" stroke="#fff" stroke-width="1.9"/>
<circle cx="712.05" cy="659.1" r="3.05" fill="none" stroke="#fff" stroke-width="1.85"/>
<circle cx="732" cy="659.1" r="3.05" fill="none" stroke="#fff" stroke-width="1.85"/>
<circle cx="732.0" cy="668.1" r="2.55" fill="#a7f52d" stroke="#3f6212" stroke-width="0.6"/>
<rect x="699.90" y="655.85" width="4.9" height="5.1" rx="1.700" fill="#6b6b6b" stroke="#d8d8d8" stroke-opacity="0.5" stroke-width="0.8"/>
<rect x="739.90" y="655.85" width="4.9" height="5.1" rx="1.700" fill="#6b6b6b" stroke="#d8d8d8" stroke-opacity="0.5" stroke-width="0.8"/>
<path d="M832.5,658.5H872.5" fill="none" stroke="#111" stroke-width="1.2"/>
<rect x="792" y="643" width="40" height="30" fill="#7b9fd8"/>
<path d="M799.8,658.95h8.5M807.2,655.2l4.600,3.800l-4.600,4.100" fill="none" stroke="#fff" stroke-width="2.050"/>
<rect x="813.85" y="649.05" width="2.25" height="14.85" fill="#fff"/>
<rect x="813.85" y="649.05" width="11.250" height="6.100" fill="#fff"/>
<rect x="818.2" y="650.2" width="1.700" height="1.700" fill="#0f4fb5"/>
<rect x="822.15" y="650.2" width="1.700" height="1.700" fill="#0f4fb5"/>
<rect x="816.15" y="652.05" width="1.700" height="1.700" fill="#0f4fb5"/>
<rect x="820.15" y="652.05" width="1.700" height="1.700" fill="#0f4fb5"/>
<rect x="789.90" y="655.85" width="4.9" height="5.1" rx="1.700" fill="#6b6b6b" stroke="#d8d8d8" stroke-opacity="0.5" stroke-width="0.8"/>
<rect x="829.90" y="655.85" width="4.9" height="5.1" rx="1.700" fill="#6b6b6b" stroke="#d8d8d8" stroke-opacity="0.5" stroke-width="0.8"/>
<path d="M912.5,658.5H1037.5q5,0 5,5V723.5q0,5 -5,5H217.5q-5,0 -5,5V753.5q0,5 5,5H232.5" fill="none" stroke="#111" stroke-width="1.2"/>
<rect x="872" y="643" width="40" height="30" fill="#7b9fd8"/>
<path d="M884.9,655.7h14.2l-7.1,9.1z" fill="#fff"/>
<circle cx="902.0" cy="668.1" r="2.55" fill="#a7f52d" stroke="#3f6212" stroke-width="0.6"/>
<rect x="869.90" y="655.85" width="4.9" height="5.1" rx="1.700" fill="#6b6b6b" stroke="#d8d8d8" stroke-opacity="0.5" stroke-width="0.8"/>
<rect x="909.90" y="655.85" width="4.9" height="5.1" rx="1.700" fill="#6b6b6b" stroke="#d8d8d8" stroke-opacity="0.5" stroke-width="0.8"/>
<circle cx="377" cy="673" r="8" fill="url(#vg)"/>
<text x="377.00" y="677.50" font-size="12.5" font-weight="bold" fill="#fff" text-anchor="middle" >V</text>
<text x="390.00" y="676.00" font-size="12" letter-spacing="-0.669" fill="#000" text-anchor="start" >move_RE</text>
<text x="395.00" y="731.00" font-size="12" letter-spacing="-0.172" fill="#000" text-anchor="start" >hold4</text>
<text x="475.00" y="731.00" font-size="12" letter-spacing="-0.379" fill="#000" text-anchor="start" >DelayRobot_4</text>
<text x="770.00" y="731.00" font-size="12" letter-spacing="-0.209" fill="#000" text-anchor="start" >bearbeitung_BAZ3r</text>
<path d="M272.5,758.5H312.5" fill="none" stroke="#111" stroke-width="1.2"/>
<path d="M352.5,758.5H392.5" fill="none" stroke="#111" stroke-width="1.2"/>
<path d="M432.5,758.5H472.5" fill="none" stroke="#111" stroke-width="1.2"/>
<path d="M512.5,758.5H632.5" fill="none" stroke="#111" stroke-width="1.2"/>
<path d="M672.5,758.5H712.5" fill="none" stroke="#111" stroke-width="1.2"/>
<path d="M752.5,758.5H792.5" fill="none" stroke="#111" stroke-width="1.2"/>
<path d="M832.5,758.5H872.5" fill="none" stroke="#111" stroke-width="1.2"/>
<path d="M912.5,758.5H962.5" fill="none" stroke="#111" stroke-width="1.2"/>
<rect x="232" y="743" width="40" height="30" fill="#7b9fd8"/>
<path d="M238.85,754h10.3M238.85,761.95h10.3M243,754v8M248.1,754v8" stroke="#fff" stroke-width="2.15" fill="none"/>
<path d="M251.2,763.1l6.9,-9l6.9,9z" fill="#fff"/>
<circle cx="252.0" cy="748.1" r="2.55" fill="#a7f52d" stroke="#3f6212" stroke-width="0.6"/>
<circle cx="262.0" cy="748.1" r="2.55" fill="#a7f52d" stroke="#3f6212" stroke-width="0.6"/>
<circle cx="242.0" cy="768.1" r="2.55" fill="#a7f52d" stroke="#3f6212" stroke-width="0.6"/>
<rect x="229.90" y="755.85" width="4.9" height="5.1" rx="1.700" fill="#6b6b6b" stroke="#d8d8d8" stroke-opacity="0.5" stroke-width="0.8"/>
<rect x="269.90" y="755.85" width="4.9" height="5.1" rx="1.700" fill="#6b6b6b" stroke="#d8d8d8" stroke-opacity="0.5" stroke-width="0.8"/>
<rect x="312" y="743" width="40" height="30" fill="#7b9fd8"/>
<path d="M318.85,754h10.3M318.85,761.95h10.3M323,754v8M328.1,754v8" stroke="#fff" stroke-width="2.15" fill="none"/>
<path d="M331.2,763.1l6.9,-9l6.9,9z" fill="#fff"/>
<circle cx="332.0" cy="748.1" r="2.55" fill="#a7f52d" stroke="#3f6212" stroke-width="0.6"/>
<circle cx="342.0" cy="748.1" r="2.55" fill="#a7f52d" stroke="#3f6212" stroke-width="0.6"/>
<circle cx="322.0" cy="768.1" r="2.55" fill="#a7f52d" stroke="#3f6212" stroke-width="0.6"/>
<rect x="309.90" y="755.85" width="4.9" height="5.1" rx="1.700" fill="#6b6b6b" stroke="#d8d8d8" stroke-opacity="0.5" stroke-width="0.8"/>
<rect x="349.90" y="755.85" width="4.9" height="5.1" rx="1.700" fill="#6b6b6b" stroke="#d8d8d8" stroke-opacity="0.5" stroke-width="0.8"/>
<rect x="392" y="743" width="40" height="30" fill="#3567b9"/>
<circle cx="412.1" cy="758.1" r="8" fill="none" stroke="#fff" stroke-width="2.1"/>
<path d="M412.1,753.1V758.4L417.1,760.1" fill="none" stroke="#fff" stroke-width="2.1" stroke-linejoin="round"/>
<rect x="389.90" y="755.85" width="4.9" height="5.1" rx="1.700" fill="#6b6b6b" stroke="#d8d8d8" stroke-opacity="0.5" stroke-width="0.8"/>
<rect x="429.90" y="755.85" width="4.9" height="5.1" rx="1.700" fill="#6b6b6b" stroke="#d8d8d8" stroke-opacity="0.5" stroke-width="0.8"/>
<rect x="472" y="743" width="40" height="30" fill="#3567b9"/>
<circle cx="492.1" cy="758.1" r="8" fill="none" stroke="#fff" stroke-width="2.1"/>
<path d="M492.1,753.1V758.4L497.1,760.1" fill="none" stroke="#fff" stroke-width="2.1" stroke-linejoin="round"/>
<rect x="469.90" y="755.85" width="4.9" height="5.1" rx="1.700" fill="#6b6b6b" stroke="#d8d8d8" stroke-opacity="0.5" stroke-width="0.8"/>
<rect x="509.90" y="755.85" width="4.9" height="5.1" rx="1.700" fill="#6b6b6b" stroke="#d8d8d8" stroke-opacity="0.5" stroke-width="0.8"/>
<rect x="632" y="743" width="40" height="30" fill="#7b9fd8"/>
<path d="M644.9,755.7h14.2l-7.1,9.1z" fill="#fff"/>
<circle cx="662.0" cy="768.1" r="2.55" fill="#a7f52d" stroke="#3f6212" stroke-width="0.6"/>
<rect x="629.90" y="755.85" width="4.9" height="5.1" rx="1.700" fill="#6b6b6b" stroke="#d8d8d8" stroke-opacity="0.5" stroke-width="0.8"/>
<rect x="669.90" y="755.85" width="4.9" height="5.1" rx="1.700" fill="#6b6b6b" stroke="#d8d8d8" stroke-opacity="0.5" stroke-width="0.8"/>
<rect x="712" y="743" width="40" height="30" fill="#800080"/>
<path d="M742,743L752,753" stroke="#fff" stroke-width="1"/>
<circle cx="725" cy="751.2" r="2.55" fill="#fff"/>
<path d="M730,749.05h8M737.4,745.4l4.6,3.7l-4.6,3.7" fill="none" stroke="#fff" stroke-width="2"/>
<path d="M722,756.1h20" stroke="#fff" stroke-width="1.9"/>
<circle cx="722.05" cy="759.1" r="3.05" fill="none" stroke="#fff" stroke-width="1.85"/>
<circle cx="742" cy="759.1" r="3.05" fill="none" stroke="#fff" stroke-width="1.85"/>
<circle cx="742.0" cy="768.1" r="2.55" fill="#a7f52d" stroke="#3f6212" stroke-width="0.6"/>
<rect x="709.90" y="755.85" width="4.9" height="5.1" rx="1.700" fill="#6b6b6b" stroke="#d8d8d8" stroke-opacity="0.5" stroke-width="0.8"/>
<rect x="749.90" y="755.85" width="4.9" height="5.1" rx="1.700" fill="#6b6b6b" stroke="#d8d8d8" stroke-opacity="0.5" stroke-width="0.8"/>
<rect x="792" y="743" width="40" height="30" fill="#3567b9"/>
<circle cx="812.1" cy="758.1" r="8" fill="none" stroke="#fff" stroke-width="2.1"/>
<path d="M812.1,753.1V758.4L817.1,760.1" fill="none" stroke="#fff" stroke-width="2.1" stroke-linejoin="round"/>
<rect x="789.90" y="755.85" width="4.9" height="5.1" rx="1.700" fill="#6b6b6b" stroke="#d8d8d8" stroke-opacity="0.5" stroke-width="0.8"/>
<rect x="829.90" y="755.85" width="4.9" height="5.1" rx="1.700" fill="#6b6b6b" stroke="#d8d8d8" stroke-opacity="0.5" stroke-width="0.8"/>
<rect x="872" y="743" width="40" height="30" fill="#800080"/>
<path d="M902,743L912,753" stroke="#fff" stroke-width="1"/>
<circle cx="885" cy="751.2" r="2.55" fill="#fff"/>
<path d="M890,749.05h8M897.4,745.4l4.6,3.7l-4.6,3.7" fill="none" stroke="#fff" stroke-width="2"/>
<path d="M882,756.1h20" stroke="#fff" stroke-width="1.9"/>
<circle cx="882.05" cy="759.1" r="3.05" fill="none" stroke="#fff" stroke-width="1.85"/>
<circle cx="902" cy="759.1" r="3.05" fill="none" stroke="#fff" stroke-width="1.85"/>
<circle cx="902.0" cy="768.1" r="2.55" fill="#a7f52d" stroke="#3f6212" stroke-width="0.6"/>
<rect x="869.90" y="755.85" width="4.9" height="5.1" rx="1.700" fill="#6b6b6b" stroke="#d8d8d8" stroke-opacity="0.5" stroke-width="0.8"/>
<rect x="909.90" y="755.85" width="4.9" height="5.1" rx="1.700" fill="#6b6b6b" stroke="#d8d8d8" stroke-opacity="0.5" stroke-width="0.8"/>
<rect x="962" y="743" width="40" height="30" fill="#7b9fd8"/>
<path d="M971.8,754h19.3M971.8,763.05h19.3M975.9,754v9M982.9,754v9M990,754v9" stroke="#fff" stroke-width="2.2" fill="none"/>
<circle cx="982.0" cy="748.1" r="2.55" fill="#a7f52d" stroke="#3f6212" stroke-width="0.6"/>
<circle cx="992.0" cy="748.1" r="2.55" fill="#a7f52d" stroke="#3f6212" stroke-width="0.6"/>
<rect x="959.90" y="755.85" width="4.9" height="5.1" rx="1.700" fill="#6b6b6b" stroke="#d8d8d8" stroke-opacity="0.5" stroke-width="0.8"/>
<rect x="999.90" y="755.85" width="4.9" height="5.1" rx="1.700" fill="#6b6b6b" stroke="#d8d8d8" stroke-opacity="0.5" stroke-width="0.8"/>
<text x="1076.00" y="739.80" font-size="12" letter-spacing="-0.614" fill="#000" text-anchor="start" >Levels</text>
<path d="M1114.8,733.3h6v5.600h-6z" stroke="#000" stroke-width="1.2" fill="#fff" stroke-linejoin="round"/><path d="M1112.8,731.3h6v5.600h-6z" stroke="#000" stroke-width="1.2" fill="#fff" stroke-linejoin="round"/></svg>
<div class="a" style="left:1128px;top:106px;width:19px;height:641px;background:#f0f0f0"></div><div class="a" style="left:1129px;top:394px;width:15px;height:43px;background:#cdcdcd"></div><div class="a" style="left:160px;top:747px;width:987px;height:19px;background:#f0f0f0"></div><div class="a" style="left:432px;top:748px;width:99px;height:15px;background:#cdcdcd"></div><div class="a" style="left:160px;top:106px;width:987px;height:2px;background:#f0f0f0"></div><div class="a" style="left:160px;top:106px;width:2px;height:659px;background:#f0f0f0"></div><svg width="1499" height="807" ><path d="M1132.5,118.5l4,-4l4,4" stroke="#505050" stroke-width="1.8" fill="none"/><path d="M1132.5,736.5l4,4l4,-4" stroke="#505050" stroke-width="1.8" fill="none"/><path d="M171,751.5l-4,4l4,4" stroke="#505050" stroke-width="1.8" fill="none"/><path d="M1118,751.5l4,4l-4,4" stroke="#505050" stroke-width="1.8" fill="none"/></svg>
<div class="a" style="left:1152px;top:82px;width:347px;height:685px;background:#f0f0f0;border:1px solid #a0a0a0;border-radius:4px 4px 0 0"></div><div class="a" style="left:1154px;top:105px;width:345px;height:1px;background:#a0a0a0"></div><div class="a" style="left:1152px;top:82px;width:103px;height:24px;background:linear-gradient(#fff,#f4f4f4);border:1px solid #a0a0a0;border-bottom:none;border-radius:4px 4px 0 0"></div><span class="t" style="left:1176.00px;top:89.34px;font-size:12px;line-height:12px;letter-spacing:-0.169px;color:#000;">Properties</span><div class="a" style="left:1155px;top:108px;width:343px;height:30px;background:linear-gradient(#fff,#fdfdfe 30%,#e3e9f4);border-bottom:1px solid #b5cbe6"></div><span class="t" style="left:1180.50px;top:115.88px;font-size:15.5px;line-height:15.5px;font-weight:bold;letter-spacing:-0.220px;color:#0d6cc6;">Main - Agent Type</span><div class="a" style="left:1155px;top:138px;width:326px;height:609.5px;background:#fff"></div><span class="t" style="left:1176.00px;top:153.14px;font-size:12px;line-height:12px;letter-spacing:-0.068px;color:#000;">Name:</span><div class="a" style="left:1226px;top:148px;width:150px;height:21px;background:#fff;border:1px solid #7a7a7a"></div><span class="t" style="left:1232.00px;top:153.14px;font-size:12px;line-height:12px;letter-spacing:0.248px;color:#000;">Main</span><div class="a" style="left:1386px;top:151px;width:13px;height:13px;background:#fff;border:1px solid #333"></div><span class="t" style="left:1402.00px;top:153.14px;font-size:12px;line-height:12px;letter-spacing:0.080px;color:#000;">Ignore</span><div class="a" style="left:1156px;top:179px;width:323px;height:20px;background:linear-gradient(#dde5f3,#f3f6fb 60%,#fff);border:1px solid #a8c0e0;border-bottom:none;border-radius:4px 4px 0 0"></div><span class="t" style="left:1176.00px;top:183.64px;font-size:12px;line-height:12px;font-weight:bold;letter-spacing:-0.257px;color:#0d6cc6;">Agent actions</span><div class="a" style="left:1156px;top:200px;width:323px;height:20px;background:linear-gradient(#dde5f3,#f3f6fb 60%,#fff);border:1px solid #a8c0e0;border-bottom:none;border-radius:4px 4px 0 0"></div><span class="t" style="left:1176.00px;top:204.64px;font-size:12px;line-height:12px;font-weight:bold;letter-spacing:-0.123px;color:#0d6cc6;">Agent in flowcharts</span><div class="a" style="left:1156px;top:221px;width:323px;height:20px;background:linear-gradient(#dde5f3,#f3f6fb 60%,#fff);border:1px solid #a8c0e0;border-bottom:none;border-radius:4px 4px 0 0"></div><span class="t" style="left:1176.00px;top:225.64px;font-size:12px;line-height:12px;font-weight:bold;letter-spacing:-0.175px;color:#0d6cc6;">Dimensions and movement</span><div class="a" style="left:1156px;top:242px;width:323px;height:20px;background:linear-gradient(#dde5f3,#f3f6fb 60%,#fff);border:1px solid #a8c0e0;border-bottom:none;border-radius:4px 4px 0 0"></div><span class="t" style="left:1176.00px;top:246.64px;font-size:12px;line-height:12px;font-weight:bold;letter-spacing:-0.139px;color:#0d6cc6;">Space and network</span><div class="a" style="left:1156px;top:263px;width:323px;height:20px;background:linear-gradient(#dde5f3,#f3f6fb 60%,#fff);border:1px solid #a8c0e0;border-bottom:none;border-radius:4px 4px 0 0"></div><span class="t" style="left:1176.00px;top:267.64px;font-size:12px;line-height:12px;font-weight:bold;letter-spacing:-0.413px;color:#0d6cc6;">Advanced Java</span><div class="a" style="left:1156px;top:284px;width:323px;height:20px;background:linear-gradient(#dde5f3,#f3f6fb 60%,#fff);border:1px solid #a8c0e0;border-bottom:none;border-radius:4px 4px 0 0"></div><span class="t" style="left:1176.00px;top:288.64px;font-size:12px;line-height:12px;font-weight:bold;letter-spacing:-0.293px;color:#0d6cc6;">Advanced</span><div class="a" style="left:1156px;top:305px;width:323px;height:20px;background:linear-gradient(#dde5f3,#f3f6fb 60%,#fff);border:1px solid #a8c0e0;border-bottom:none;border-radius:4px 4px 0 0"></div><span class="t" style="left:1176.00px;top:309.64px;font-size:12px;line-height:12px;font-weight:bold;letter-spacing:-0.182px;color:#0d6cc6;">Description</span><svg width="1499" height="807" ><rect x="1157.500" y="87.500" width="13" height="12" fill="#fff" stroke="#465f8c" stroke-width="1"/><rect x="1158" y="88" width="12" height="2.500" fill="#8ea6d2"/><path d="M1158,93.500h12M1158,96.500h12M1162.500,90v9" stroke="#8fa4c8" stroke-width="1"/><path d="M1237.5,91.5l2,-2l3,3l3,-3l2,2l-3,3l3,3l-2,2l-3,-3l-3,3l-2,-2l3,-3z" fill="#fff" stroke="#555" stroke-width="1" stroke-linejoin="miter"/><rect x="1404.500" y="90.500" width="13" height="11" fill="#e6f2fb" stroke="#a89868" stroke-width="1"/><rect x="1404" y="90" width="14" height="2.500" fill="#4f86d0"/><path d="M1413.500,94.500l4.500,-6.500l3,2.200l-4.500,6.300z" fill="#2f9a2f" stroke="#1f7a1f" stroke-width="0.600"/><path d="M1412,97.500l2.500,-2.500" stroke="#333" stroke-width="1.200"/><circle cx="1438.300" cy="89.3" r="1.900" fill="#fff" stroke="#444" stroke-width="1"/><circle cx="1438.300" cy="94.3" r="1.900" fill="#fff" stroke="#444" stroke-width="1"/><circle cx="1438.300" cy="99.3" r="1.900" fill="#fff" stroke="#444" stroke-width="1"/><rect x="1456.5" y="88.5" width="9" height="3" fill="#fff" stroke="#555" stroke-width="1"/><rect x="1479.5" y="88.5" width="9" height="9" fill="#fff" stroke="#555" stroke-width="1"/><path d="M1479.5,90.5h9" stroke="#555" stroke-width="1"/><circle cx="1166.3" cy="123" r="6.6" fill="#c81e1e"/><circle cx="1166.3" cy="119.3" r="1.45" fill="#fff"/><path d="M1162.30,121.30L1170.30,121.30L1170.30,122.50L1167.80,122.50L1168.70,127.40L1167.20,127.40L1166.30,124.80L1165.40,127.40L1163.90,127.40L1164.80,122.50L1162.30,122.50Z" fill="#fff"/><path d="M1164.500,186v8l4.300,-4z" fill="#0d6cc6"/><path d="M1164.500,207v8l4.300,-4z" fill="#0d6cc6"/><path d="M1164.500,228v8l4.300,-4z" fill="#0d6cc6"/><path d="M1164.500,249v8l4.300,-4z" fill="#0d6cc6"/><path d="M1164.500,270v8l4.300,-4z" fill="#0d6cc6"/><path d="M1164.500,291v8l4.300,-4z" fill="#0d6cc6"/><path d="M1164.500,312v8l4.300,-4z" fill="#0d6cc6"/><path d="M1484,149l4,-4l4,4" stroke="#c8c8c8" stroke-width="1.8" fill="none"/><path d="M1484,736l4,4l4,-4" stroke="#c8c8c8" stroke-width="1.8" fill="none"/><path d="M1165,751l-4,4l4,4" stroke="#bdbdbd" stroke-width="1.8" fill="none"/><path d="M1471,751l4,4l-4,4" stroke="#bdbdbd" stroke-width="1.8" fill="none"/></svg>
<span class="t" style="left:8.00px;top:771.84px;font-size:12px;line-height:12px;letter-spacing:-0.118px;color:#000;">Virtual Learning Factory v7</span><div class="a" style="left:411px;top:767px;width:1px;height:22px;background:#a0a0a0"></div><div class="a" style="left:474px;top:767px;width:1px;height:22px;background:#a0a0a0"></div><div class="a" style="left:597px;top:767px;width:1px;height:22px;background:#a0a0a0"></div><div class="a" style="left:785px;top:767px;width:1px;height:22px;background:#a0a0a0"></div><span class="t" style="left:605.00px;top:771.84px;font-size:12px;line-height:12px;letter-spacing:-0.198px;color:#000;">Time: seconds</span><span class="t" style="left:793.00px;top:771.84px;font-size:12px;line-height:12px;letter-spacing:-0.272px;color:#000;">1meters = 25px, X=271, Y=1878</span><svg width="1499" height="807" ><rect x="422" y="772" width="11" height="9" fill="#e8f0fb" stroke="#1d4f9f" stroke-width="2"/><path d="M424.500,775h6M424.500,777.500h4.500" stroke="#1d4f9f" stroke-width="1"/><path d="M425.500,783h4M423,784.500h9" stroke="#1d4f9f" stroke-width="1.300"/><rect x="443.500" y="771.500" width="9" height="13" fill="#fff" stroke="#a88a4a" stroke-width="1"/><path d="M443.500,778h9" stroke="#a88a4a" stroke-width="1"/><circle cx="448" cy="775" r="2.200" fill="#e03a3a"/><path d="M445.500,784l2.500,-4.500l2.500,4.500z" fill="#f0a020"/><path d="M453,772h3q-2,3 0,6q-2,3 0,6h-3z" fill="#dfe9f8" stroke="#7a9ad0" stroke-width="0.800"/><path d="M483,773l3,3M497,773l-3,3M485,786l2,-3M497,786l-3,-4" stroke="#9a9a9a" stroke-width="1"/><circle cx="490" cy="779" r="3.500" fill="none" stroke="#9a9a9a" stroke-width="1"/><circle cx="509" cy="776" r="3.300" fill="none" stroke="#9a9a9a" stroke-width="1"/><path d="M507,784v-5h10v5zM512,779l3,-4l3,4" fill="#9a9a9a" stroke="#9a9a9a" stroke-width="0.800"/><path d="M528,781q6,-8 14,-1M535,774v3M540,779l3,4l1,-4" stroke="#9a9a9a" stroke-width="1" fill="none"/><path d="M556.500,772v14M553,776h12M554,783l2.500,3l2.500,-3M562,773l3,3l-3,3" stroke="#9a9a9a" stroke-width="1" fill="none"/><path d="M582,772v6M582,778l-6,7M582,778l7,6" stroke="#9a9a9a" stroke-width="1" fill="none"/><circle cx="582" cy="779" r="2.800" fill="#9a9a9a"/><path d="M576,781q6,7 12,0" stroke="#9a9a9a" stroke-width="0.800" fill="none"/><path d="M1218,773V788" stroke="#8c7a4e" stroke-width="1.400" stroke-dasharray="1.500,1.800" fill="none"/></svg>
</body></html>
